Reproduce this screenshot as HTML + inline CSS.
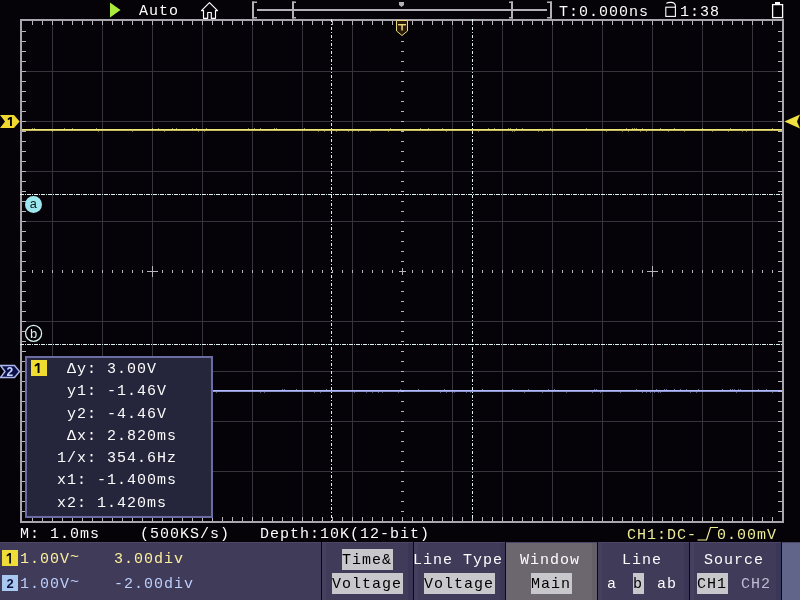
<!DOCTYPE html>
<html><head><meta charset="utf-8"><style>
html,body{margin:0;padding:0;}
body{width:800px;height:600px;background:#060308;position:relative;overflow:hidden;font-family:"Liberation Mono",monospace;}
.t{will-change:transform;position:absolute;white-space:pre;font-size:15px;letter-spacing:1px;line-height:15px;color:#fcfcfc;}
svg{position:absolute;left:0;top:0;will-change:transform;}
.hl{background:#c8c8cc;color:#000;padding-top:3px;padding-bottom:1px;padding-right:1px;}
</style></head><body>
<svg width="800" height="600" viewBox="0 0 800 600" shape-rendering="crispEdges">
<rect x="52" y="21" width="1" height="500" fill="#36343c" />
<rect x="102" y="21" width="1" height="500" fill="#36343c" />
<rect x="152" y="21" width="1" height="500" fill="#36343c" />
<rect x="202" y="21" width="1" height="500" fill="#36343c" />
<rect x="252" y="21" width="1" height="500" fill="#36343c" />
<rect x="302" y="21" width="1" height="500" fill="#36343c" />
<rect x="352" y="21" width="1" height="500" fill="#36343c" />
<rect x="452" y="21" width="1" height="500" fill="#36343c" />
<rect x="502" y="21" width="1" height="500" fill="#36343c" />
<rect x="552" y="21" width="1" height="500" fill="#36343c" />
<rect x="602" y="21" width="1" height="500" fill="#36343c" />
<rect x="652" y="21" width="1" height="500" fill="#36343c" />
<rect x="702" y="21" width="1" height="500" fill="#36343c" />
<rect x="752" y="21" width="1" height="500" fill="#36343c" />
<rect x="22" y="71" width="760" height="1" fill="#36343c" />
<rect x="22" y="121" width="760" height="1" fill="#36343c" />
<rect x="22" y="171" width="760" height="1" fill="#36343c" />
<rect x="22" y="221" width="760" height="1" fill="#36343c" />
<rect x="22" y="321" width="760" height="1" fill="#36343c" />
<rect x="22" y="371" width="760" height="1" fill="#36343c" />
<rect x="22" y="421" width="760" height="1" fill="#36343c" />
<rect x="22" y="471" width="760" height="1" fill="#36343c" />
<rect x="32" y="270" width="1" height="3" fill="#b8b4bc" />
<rect x="42" y="270" width="1" height="3" fill="#b8b4bc" />
<rect x="52" y="270" width="1" height="3" fill="#b8b4bc" />
<rect x="62" y="270" width="1" height="3" fill="#b8b4bc" />
<rect x="72" y="270" width="1" height="3" fill="#b8b4bc" />
<rect x="82" y="270" width="1" height="3" fill="#b8b4bc" />
<rect x="92" y="270" width="1" height="3" fill="#b8b4bc" />
<rect x="102" y="270" width="1" height="3" fill="#b8b4bc" />
<rect x="112" y="270" width="1" height="3" fill="#b8b4bc" />
<rect x="122" y="270" width="1" height="3" fill="#b8b4bc" />
<rect x="132" y="270" width="1" height="3" fill="#b8b4bc" />
<rect x="142" y="270" width="1" height="3" fill="#b8b4bc" />
<rect x="152" y="270" width="1" height="3" fill="#b8b4bc" />
<rect x="162" y="270" width="1" height="3" fill="#b8b4bc" />
<rect x="172" y="270" width="1" height="3" fill="#b8b4bc" />
<rect x="182" y="270" width="1" height="3" fill="#b8b4bc" />
<rect x="192" y="270" width="1" height="3" fill="#b8b4bc" />
<rect x="202" y="270" width="1" height="3" fill="#b8b4bc" />
<rect x="212" y="270" width="1" height="3" fill="#b8b4bc" />
<rect x="222" y="270" width="1" height="3" fill="#b8b4bc" />
<rect x="232" y="270" width="1" height="3" fill="#b8b4bc" />
<rect x="242" y="270" width="1" height="3" fill="#b8b4bc" />
<rect x="252" y="270" width="1" height="3" fill="#b8b4bc" />
<rect x="262" y="270" width="1" height="3" fill="#b8b4bc" />
<rect x="272" y="270" width="1" height="3" fill="#b8b4bc" />
<rect x="282" y="270" width="1" height="3" fill="#b8b4bc" />
<rect x="292" y="270" width="1" height="3" fill="#b8b4bc" />
<rect x="302" y="270" width="1" height="3" fill="#b8b4bc" />
<rect x="312" y="270" width="1" height="3" fill="#b8b4bc" />
<rect x="322" y="270" width="1" height="3" fill="#b8b4bc" />
<rect x="332" y="270" width="1" height="3" fill="#b8b4bc" />
<rect x="342" y="270" width="1" height="3" fill="#b8b4bc" />
<rect x="352" y="270" width="1" height="3" fill="#b8b4bc" />
<rect x="362" y="270" width="1" height="3" fill="#b8b4bc" />
<rect x="372" y="270" width="1" height="3" fill="#b8b4bc" />
<rect x="382" y="270" width="1" height="3" fill="#b8b4bc" />
<rect x="392" y="270" width="1" height="3" fill="#b8b4bc" />
<rect x="402" y="270" width="1" height="3" fill="#b8b4bc" />
<rect x="412" y="270" width="1" height="3" fill="#b8b4bc" />
<rect x="422" y="270" width="1" height="3" fill="#b8b4bc" />
<rect x="432" y="270" width="1" height="3" fill="#b8b4bc" />
<rect x="442" y="270" width="1" height="3" fill="#b8b4bc" />
<rect x="452" y="270" width="1" height="3" fill="#b8b4bc" />
<rect x="462" y="270" width="1" height="3" fill="#b8b4bc" />
<rect x="472" y="270" width="1" height="3" fill="#b8b4bc" />
<rect x="482" y="270" width="1" height="3" fill="#b8b4bc" />
<rect x="492" y="270" width="1" height="3" fill="#b8b4bc" />
<rect x="502" y="270" width="1" height="3" fill="#b8b4bc" />
<rect x="512" y="270" width="1" height="3" fill="#b8b4bc" />
<rect x="522" y="270" width="1" height="3" fill="#b8b4bc" />
<rect x="532" y="270" width="1" height="3" fill="#b8b4bc" />
<rect x="542" y="270" width="1" height="3" fill="#b8b4bc" />
<rect x="552" y="270" width="1" height="3" fill="#b8b4bc" />
<rect x="562" y="270" width="1" height="3" fill="#b8b4bc" />
<rect x="572" y="270" width="1" height="3" fill="#b8b4bc" />
<rect x="582" y="270" width="1" height="3" fill="#b8b4bc" />
<rect x="592" y="270" width="1" height="3" fill="#b8b4bc" />
<rect x="602" y="270" width="1" height="3" fill="#b8b4bc" />
<rect x="612" y="270" width="1" height="3" fill="#b8b4bc" />
<rect x="622" y="270" width="1" height="3" fill="#b8b4bc" />
<rect x="632" y="270" width="1" height="3" fill="#b8b4bc" />
<rect x="642" y="270" width="1" height="3" fill="#b8b4bc" />
<rect x="652" y="270" width="1" height="3" fill="#b8b4bc" />
<rect x="662" y="270" width="1" height="3" fill="#b8b4bc" />
<rect x="672" y="270" width="1" height="3" fill="#b8b4bc" />
<rect x="682" y="270" width="1" height="3" fill="#b8b4bc" />
<rect x="692" y="270" width="1" height="3" fill="#b8b4bc" />
<rect x="702" y="270" width="1" height="3" fill="#b8b4bc" />
<rect x="712" y="270" width="1" height="3" fill="#b8b4bc" />
<rect x="722" y="270" width="1" height="3" fill="#b8b4bc" />
<rect x="732" y="270" width="1" height="3" fill="#b8b4bc" />
<rect x="742" y="270" width="1" height="3" fill="#b8b4bc" />
<rect x="752" y="270" width="1" height="3" fill="#b8b4bc" />
<rect x="762" y="270" width="1" height="3" fill="#b8b4bc" />
<rect x="772" y="270" width="1" height="3" fill="#b8b4bc" />
<rect x="401" y="31" width="3" height="1" fill="#b8b4bc" />
<rect x="401" y="41" width="3" height="1" fill="#b8b4bc" />
<rect x="401" y="51" width="3" height="1" fill="#b8b4bc" />
<rect x="401" y="61" width="3" height="1" fill="#b8b4bc" />
<rect x="401" y="71" width="3" height="1" fill="#b8b4bc" />
<rect x="401" y="81" width="3" height="1" fill="#b8b4bc" />
<rect x="401" y="91" width="3" height="1" fill="#b8b4bc" />
<rect x="401" y="101" width="3" height="1" fill="#b8b4bc" />
<rect x="401" y="111" width="3" height="1" fill="#b8b4bc" />
<rect x="401" y="121" width="3" height="1" fill="#b8b4bc" />
<rect x="401" y="131" width="3" height="1" fill="#b8b4bc" />
<rect x="401" y="141" width="3" height="1" fill="#b8b4bc" />
<rect x="401" y="151" width="3" height="1" fill="#b8b4bc" />
<rect x="401" y="161" width="3" height="1" fill="#b8b4bc" />
<rect x="401" y="171" width="3" height="1" fill="#b8b4bc" />
<rect x="401" y="181" width="3" height="1" fill="#b8b4bc" />
<rect x="401" y="191" width="3" height="1" fill="#b8b4bc" />
<rect x="401" y="201" width="3" height="1" fill="#b8b4bc" />
<rect x="401" y="211" width="3" height="1" fill="#b8b4bc" />
<rect x="401" y="221" width="3" height="1" fill="#b8b4bc" />
<rect x="401" y="231" width="3" height="1" fill="#b8b4bc" />
<rect x="401" y="241" width="3" height="1" fill="#b8b4bc" />
<rect x="401" y="251" width="3" height="1" fill="#b8b4bc" />
<rect x="401" y="261" width="3" height="1" fill="#b8b4bc" />
<rect x="401" y="271" width="3" height="1" fill="#b8b4bc" />
<rect x="401" y="281" width="3" height="1" fill="#b8b4bc" />
<rect x="401" y="291" width="3" height="1" fill="#b8b4bc" />
<rect x="401" y="301" width="3" height="1" fill="#b8b4bc" />
<rect x="401" y="311" width="3" height="1" fill="#b8b4bc" />
<rect x="401" y="321" width="3" height="1" fill="#b8b4bc" />
<rect x="401" y="331" width="3" height="1" fill="#b8b4bc" />
<rect x="401" y="341" width="3" height="1" fill="#b8b4bc" />
<rect x="401" y="351" width="3" height="1" fill="#b8b4bc" />
<rect x="401" y="361" width="3" height="1" fill="#b8b4bc" />
<rect x="401" y="371" width="3" height="1" fill="#b8b4bc" />
<rect x="401" y="381" width="3" height="1" fill="#b8b4bc" />
<rect x="401" y="391" width="3" height="1" fill="#b8b4bc" />
<rect x="401" y="401" width="3" height="1" fill="#b8b4bc" />
<rect x="401" y="411" width="3" height="1" fill="#b8b4bc" />
<rect x="401" y="421" width="3" height="1" fill="#b8b4bc" />
<rect x="401" y="431" width="3" height="1" fill="#b8b4bc" />
<rect x="401" y="441" width="3" height="1" fill="#b8b4bc" />
<rect x="401" y="451" width="3" height="1" fill="#b8b4bc" />
<rect x="401" y="461" width="3" height="1" fill="#b8b4bc" />
<rect x="401" y="471" width="3" height="1" fill="#b8b4bc" />
<rect x="401" y="481" width="3" height="1" fill="#b8b4bc" />
<rect x="401" y="491" width="3" height="1" fill="#b8b4bc" />
<rect x="401" y="501" width="3" height="1" fill="#b8b4bc" />
<rect x="401" y="511" width="3" height="1" fill="#b8b4bc" />
<rect x="147" y="271" width="11" height="1" fill="#b8b4bc" />
<rect x="152" y="266" width="1" height="11" fill="#b8b4bc" />
<rect x="647" y="271" width="11" height="1" fill="#b8b4bc" />
<rect x="652" y="266" width="1" height="11" fill="#b8b4bc" />
<rect x="399" y="271" width="7" height="1" fill="#b8b4bc" />
<rect x="402" y="268" width="1" height="7" fill="#b8b4bc" />
<rect x="32" y="21" width="1" height="4" fill="#b8b4bc" />
<rect x="32" y="517" width="1" height="4" fill="#b8b4bc" />
<rect x="42" y="21" width="1" height="4" fill="#b8b4bc" />
<rect x="42" y="517" width="1" height="4" fill="#b8b4bc" />
<rect x="52" y="21" width="1" height="4" fill="#b8b4bc" />
<rect x="52" y="517" width="1" height="4" fill="#b8b4bc" />
<rect x="62" y="21" width="1" height="4" fill="#b8b4bc" />
<rect x="62" y="517" width="1" height="4" fill="#b8b4bc" />
<rect x="72" y="21" width="1" height="4" fill="#b8b4bc" />
<rect x="72" y="517" width="1" height="4" fill="#b8b4bc" />
<rect x="82" y="21" width="1" height="4" fill="#b8b4bc" />
<rect x="82" y="517" width="1" height="4" fill="#b8b4bc" />
<rect x="92" y="21" width="1" height="4" fill="#b8b4bc" />
<rect x="92" y="517" width="1" height="4" fill="#b8b4bc" />
<rect x="102" y="21" width="1" height="4" fill="#b8b4bc" />
<rect x="102" y="517" width="1" height="4" fill="#b8b4bc" />
<rect x="112" y="21" width="1" height="4" fill="#b8b4bc" />
<rect x="112" y="517" width="1" height="4" fill="#b8b4bc" />
<rect x="122" y="21" width="1" height="4" fill="#b8b4bc" />
<rect x="122" y="517" width="1" height="4" fill="#b8b4bc" />
<rect x="132" y="21" width="1" height="4" fill="#b8b4bc" />
<rect x="132" y="517" width="1" height="4" fill="#b8b4bc" />
<rect x="142" y="21" width="1" height="4" fill="#b8b4bc" />
<rect x="142" y="517" width="1" height="4" fill="#b8b4bc" />
<rect x="152" y="21" width="1" height="4" fill="#b8b4bc" />
<rect x="152" y="517" width="1" height="4" fill="#b8b4bc" />
<rect x="162" y="21" width="1" height="4" fill="#b8b4bc" />
<rect x="162" y="517" width="1" height="4" fill="#b8b4bc" />
<rect x="172" y="21" width="1" height="4" fill="#b8b4bc" />
<rect x="172" y="517" width="1" height="4" fill="#b8b4bc" />
<rect x="182" y="21" width="1" height="4" fill="#b8b4bc" />
<rect x="182" y="517" width="1" height="4" fill="#b8b4bc" />
<rect x="192" y="21" width="1" height="4" fill="#b8b4bc" />
<rect x="192" y="517" width="1" height="4" fill="#b8b4bc" />
<rect x="202" y="21" width="1" height="4" fill="#b8b4bc" />
<rect x="202" y="517" width="1" height="4" fill="#b8b4bc" />
<rect x="212" y="21" width="1" height="4" fill="#b8b4bc" />
<rect x="212" y="517" width="1" height="4" fill="#b8b4bc" />
<rect x="222" y="21" width="1" height="4" fill="#b8b4bc" />
<rect x="222" y="517" width="1" height="4" fill="#b8b4bc" />
<rect x="232" y="21" width="1" height="4" fill="#b8b4bc" />
<rect x="232" y="517" width="1" height="4" fill="#b8b4bc" />
<rect x="242" y="21" width="1" height="4" fill="#b8b4bc" />
<rect x="242" y="517" width="1" height="4" fill="#b8b4bc" />
<rect x="252" y="21" width="1" height="4" fill="#b8b4bc" />
<rect x="252" y="517" width="1" height="4" fill="#b8b4bc" />
<rect x="262" y="21" width="1" height="4" fill="#b8b4bc" />
<rect x="262" y="517" width="1" height="4" fill="#b8b4bc" />
<rect x="272" y="21" width="1" height="4" fill="#b8b4bc" />
<rect x="272" y="517" width="1" height="4" fill="#b8b4bc" />
<rect x="282" y="21" width="1" height="4" fill="#b8b4bc" />
<rect x="282" y="517" width="1" height="4" fill="#b8b4bc" />
<rect x="292" y="21" width="1" height="4" fill="#b8b4bc" />
<rect x="292" y="517" width="1" height="4" fill="#b8b4bc" />
<rect x="302" y="21" width="1" height="4" fill="#b8b4bc" />
<rect x="302" y="517" width="1" height="4" fill="#b8b4bc" />
<rect x="312" y="21" width="1" height="4" fill="#b8b4bc" />
<rect x="312" y="517" width="1" height="4" fill="#b8b4bc" />
<rect x="322" y="21" width="1" height="4" fill="#b8b4bc" />
<rect x="322" y="517" width="1" height="4" fill="#b8b4bc" />
<rect x="332" y="21" width="1" height="4" fill="#b8b4bc" />
<rect x="332" y="517" width="1" height="4" fill="#b8b4bc" />
<rect x="342" y="21" width="1" height="4" fill="#b8b4bc" />
<rect x="342" y="517" width="1" height="4" fill="#b8b4bc" />
<rect x="352" y="21" width="1" height="4" fill="#b8b4bc" />
<rect x="352" y="517" width="1" height="4" fill="#b8b4bc" />
<rect x="362" y="21" width="1" height="4" fill="#b8b4bc" />
<rect x="362" y="517" width="1" height="4" fill="#b8b4bc" />
<rect x="372" y="21" width="1" height="4" fill="#b8b4bc" />
<rect x="372" y="517" width="1" height="4" fill="#b8b4bc" />
<rect x="382" y="21" width="1" height="4" fill="#b8b4bc" />
<rect x="382" y="517" width="1" height="4" fill="#b8b4bc" />
<rect x="392" y="21" width="1" height="4" fill="#b8b4bc" />
<rect x="392" y="517" width="1" height="4" fill="#b8b4bc" />
<rect x="402" y="21" width="1" height="4" fill="#b8b4bc" />
<rect x="402" y="517" width="1" height="4" fill="#b8b4bc" />
<rect x="412" y="21" width="1" height="4" fill="#b8b4bc" />
<rect x="412" y="517" width="1" height="4" fill="#b8b4bc" />
<rect x="422" y="21" width="1" height="4" fill="#b8b4bc" />
<rect x="422" y="517" width="1" height="4" fill="#b8b4bc" />
<rect x="432" y="21" width="1" height="4" fill="#b8b4bc" />
<rect x="432" y="517" width="1" height="4" fill="#b8b4bc" />
<rect x="442" y="21" width="1" height="4" fill="#b8b4bc" />
<rect x="442" y="517" width="1" height="4" fill="#b8b4bc" />
<rect x="452" y="21" width="1" height="4" fill="#b8b4bc" />
<rect x="452" y="517" width="1" height="4" fill="#b8b4bc" />
<rect x="462" y="21" width="1" height="4" fill="#b8b4bc" />
<rect x="462" y="517" width="1" height="4" fill="#b8b4bc" />
<rect x="472" y="21" width="1" height="4" fill="#b8b4bc" />
<rect x="472" y="517" width="1" height="4" fill="#b8b4bc" />
<rect x="482" y="21" width="1" height="4" fill="#b8b4bc" />
<rect x="482" y="517" width="1" height="4" fill="#b8b4bc" />
<rect x="492" y="21" width="1" height="4" fill="#b8b4bc" />
<rect x="492" y="517" width="1" height="4" fill="#b8b4bc" />
<rect x="502" y="21" width="1" height="4" fill="#b8b4bc" />
<rect x="502" y="517" width="1" height="4" fill="#b8b4bc" />
<rect x="512" y="21" width="1" height="4" fill="#b8b4bc" />
<rect x="512" y="517" width="1" height="4" fill="#b8b4bc" />
<rect x="522" y="21" width="1" height="4" fill="#b8b4bc" />
<rect x="522" y="517" width="1" height="4" fill="#b8b4bc" />
<rect x="532" y="21" width="1" height="4" fill="#b8b4bc" />
<rect x="532" y="517" width="1" height="4" fill="#b8b4bc" />
<rect x="542" y="21" width="1" height="4" fill="#b8b4bc" />
<rect x="542" y="517" width="1" height="4" fill="#b8b4bc" />
<rect x="552" y="21" width="1" height="4" fill="#b8b4bc" />
<rect x="552" y="517" width="1" height="4" fill="#b8b4bc" />
<rect x="562" y="21" width="1" height="4" fill="#b8b4bc" />
<rect x="562" y="517" width="1" height="4" fill="#b8b4bc" />
<rect x="572" y="21" width="1" height="4" fill="#b8b4bc" />
<rect x="572" y="517" width="1" height="4" fill="#b8b4bc" />
<rect x="582" y="21" width="1" height="4" fill="#b8b4bc" />
<rect x="582" y="517" width="1" height="4" fill="#b8b4bc" />
<rect x="592" y="21" width="1" height="4" fill="#b8b4bc" />
<rect x="592" y="517" width="1" height="4" fill="#b8b4bc" />
<rect x="602" y="21" width="1" height="4" fill="#b8b4bc" />
<rect x="602" y="517" width="1" height="4" fill="#b8b4bc" />
<rect x="612" y="21" width="1" height="4" fill="#b8b4bc" />
<rect x="612" y="517" width="1" height="4" fill="#b8b4bc" />
<rect x="622" y="21" width="1" height="4" fill="#b8b4bc" />
<rect x="622" y="517" width="1" height="4" fill="#b8b4bc" />
<rect x="632" y="21" width="1" height="4" fill="#b8b4bc" />
<rect x="632" y="517" width="1" height="4" fill="#b8b4bc" />
<rect x="642" y="21" width="1" height="4" fill="#b8b4bc" />
<rect x="642" y="517" width="1" height="4" fill="#b8b4bc" />
<rect x="652" y="21" width="1" height="4" fill="#b8b4bc" />
<rect x="652" y="517" width="1" height="4" fill="#b8b4bc" />
<rect x="662" y="21" width="1" height="4" fill="#b8b4bc" />
<rect x="662" y="517" width="1" height="4" fill="#b8b4bc" />
<rect x="672" y="21" width="1" height="4" fill="#b8b4bc" />
<rect x="672" y="517" width="1" height="4" fill="#b8b4bc" />
<rect x="682" y="21" width="1" height="4" fill="#b8b4bc" />
<rect x="682" y="517" width="1" height="4" fill="#b8b4bc" />
<rect x="692" y="21" width="1" height="4" fill="#b8b4bc" />
<rect x="692" y="517" width="1" height="4" fill="#b8b4bc" />
<rect x="702" y="21" width="1" height="4" fill="#b8b4bc" />
<rect x="702" y="517" width="1" height="4" fill="#b8b4bc" />
<rect x="712" y="21" width="1" height="4" fill="#b8b4bc" />
<rect x="712" y="517" width="1" height="4" fill="#b8b4bc" />
<rect x="722" y="21" width="1" height="4" fill="#b8b4bc" />
<rect x="722" y="517" width="1" height="4" fill="#b8b4bc" />
<rect x="732" y="21" width="1" height="4" fill="#b8b4bc" />
<rect x="732" y="517" width="1" height="4" fill="#b8b4bc" />
<rect x="742" y="21" width="1" height="4" fill="#b8b4bc" />
<rect x="742" y="517" width="1" height="4" fill="#b8b4bc" />
<rect x="752" y="21" width="1" height="4" fill="#b8b4bc" />
<rect x="752" y="517" width="1" height="4" fill="#b8b4bc" />
<rect x="762" y="21" width="1" height="4" fill="#b8b4bc" />
<rect x="762" y="517" width="1" height="4" fill="#b8b4bc" />
<rect x="772" y="21" width="1" height="4" fill="#b8b4bc" />
<rect x="772" y="517" width="1" height="4" fill="#b8b4bc" />
<rect x="22" y="31" width="4" height="1" fill="#b8b4bc" />
<rect x="778" y="31" width="4" height="1" fill="#b8b4bc" />
<rect x="22" y="41" width="4" height="1" fill="#b8b4bc" />
<rect x="778" y="41" width="4" height="1" fill="#b8b4bc" />
<rect x="22" y="51" width="4" height="1" fill="#b8b4bc" />
<rect x="778" y="51" width="4" height="1" fill="#b8b4bc" />
<rect x="22" y="61" width="4" height="1" fill="#b8b4bc" />
<rect x="778" y="61" width="4" height="1" fill="#b8b4bc" />
<rect x="22" y="71" width="4" height="1" fill="#b8b4bc" />
<rect x="778" y="71" width="4" height="1" fill="#b8b4bc" />
<rect x="22" y="81" width="4" height="1" fill="#b8b4bc" />
<rect x="778" y="81" width="4" height="1" fill="#b8b4bc" />
<rect x="22" y="91" width="4" height="1" fill="#b8b4bc" />
<rect x="778" y="91" width="4" height="1" fill="#b8b4bc" />
<rect x="22" y="101" width="4" height="1" fill="#b8b4bc" />
<rect x="778" y="101" width="4" height="1" fill="#b8b4bc" />
<rect x="22" y="111" width="4" height="1" fill="#b8b4bc" />
<rect x="778" y="111" width="4" height="1" fill="#b8b4bc" />
<rect x="22" y="121" width="4" height="1" fill="#b8b4bc" />
<rect x="778" y="121" width="4" height="1" fill="#b8b4bc" />
<rect x="22" y="131" width="4" height="1" fill="#b8b4bc" />
<rect x="778" y="131" width="4" height="1" fill="#b8b4bc" />
<rect x="22" y="141" width="4" height="1" fill="#b8b4bc" />
<rect x="778" y="141" width="4" height="1" fill="#b8b4bc" />
<rect x="22" y="151" width="4" height="1" fill="#b8b4bc" />
<rect x="778" y="151" width="4" height="1" fill="#b8b4bc" />
<rect x="22" y="161" width="4" height="1" fill="#b8b4bc" />
<rect x="778" y="161" width="4" height="1" fill="#b8b4bc" />
<rect x="22" y="171" width="4" height="1" fill="#b8b4bc" />
<rect x="778" y="171" width="4" height="1" fill="#b8b4bc" />
<rect x="22" y="181" width="4" height="1" fill="#b8b4bc" />
<rect x="778" y="181" width="4" height="1" fill="#b8b4bc" />
<rect x="22" y="191" width="4" height="1" fill="#b8b4bc" />
<rect x="778" y="191" width="4" height="1" fill="#b8b4bc" />
<rect x="22" y="201" width="4" height="1" fill="#b8b4bc" />
<rect x="778" y="201" width="4" height="1" fill="#b8b4bc" />
<rect x="22" y="211" width="4" height="1" fill="#b8b4bc" />
<rect x="778" y="211" width="4" height="1" fill="#b8b4bc" />
<rect x="22" y="221" width="4" height="1" fill="#b8b4bc" />
<rect x="778" y="221" width="4" height="1" fill="#b8b4bc" />
<rect x="22" y="231" width="4" height="1" fill="#b8b4bc" />
<rect x="778" y="231" width="4" height="1" fill="#b8b4bc" />
<rect x="22" y="241" width="4" height="1" fill="#b8b4bc" />
<rect x="778" y="241" width="4" height="1" fill="#b8b4bc" />
<rect x="22" y="251" width="4" height="1" fill="#b8b4bc" />
<rect x="778" y="251" width="4" height="1" fill="#b8b4bc" />
<rect x="22" y="261" width="4" height="1" fill="#b8b4bc" />
<rect x="778" y="261" width="4" height="1" fill="#b8b4bc" />
<rect x="22" y="271" width="4" height="1" fill="#b8b4bc" />
<rect x="778" y="271" width="4" height="1" fill="#b8b4bc" />
<rect x="22" y="281" width="4" height="1" fill="#b8b4bc" />
<rect x="778" y="281" width="4" height="1" fill="#b8b4bc" />
<rect x="22" y="291" width="4" height="1" fill="#b8b4bc" />
<rect x="778" y="291" width="4" height="1" fill="#b8b4bc" />
<rect x="22" y="301" width="4" height="1" fill="#b8b4bc" />
<rect x="778" y="301" width="4" height="1" fill="#b8b4bc" />
<rect x="22" y="311" width="4" height="1" fill="#b8b4bc" />
<rect x="778" y="311" width="4" height="1" fill="#b8b4bc" />
<rect x="22" y="321" width="4" height="1" fill="#b8b4bc" />
<rect x="778" y="321" width="4" height="1" fill="#b8b4bc" />
<rect x="22" y="331" width="4" height="1" fill="#b8b4bc" />
<rect x="778" y="331" width="4" height="1" fill="#b8b4bc" />
<rect x="22" y="341" width="4" height="1" fill="#b8b4bc" />
<rect x="778" y="341" width="4" height="1" fill="#b8b4bc" />
<rect x="22" y="351" width="4" height="1" fill="#b8b4bc" />
<rect x="778" y="351" width="4" height="1" fill="#b8b4bc" />
<rect x="22" y="361" width="4" height="1" fill="#b8b4bc" />
<rect x="778" y="361" width="4" height="1" fill="#b8b4bc" />
<rect x="22" y="371" width="4" height="1" fill="#b8b4bc" />
<rect x="778" y="371" width="4" height="1" fill="#b8b4bc" />
<rect x="22" y="381" width="4" height="1" fill="#b8b4bc" />
<rect x="778" y="381" width="4" height="1" fill="#b8b4bc" />
<rect x="22" y="391" width="4" height="1" fill="#b8b4bc" />
<rect x="778" y="391" width="4" height="1" fill="#b8b4bc" />
<rect x="22" y="401" width="4" height="1" fill="#b8b4bc" />
<rect x="778" y="401" width="4" height="1" fill="#b8b4bc" />
<rect x="22" y="411" width="4" height="1" fill="#b8b4bc" />
<rect x="778" y="411" width="4" height="1" fill="#b8b4bc" />
<rect x="22" y="421" width="4" height="1" fill="#b8b4bc" />
<rect x="778" y="421" width="4" height="1" fill="#b8b4bc" />
<rect x="22" y="431" width="4" height="1" fill="#b8b4bc" />
<rect x="778" y="431" width="4" height="1" fill="#b8b4bc" />
<rect x="22" y="441" width="4" height="1" fill="#b8b4bc" />
<rect x="778" y="441" width="4" height="1" fill="#b8b4bc" />
<rect x="22" y="451" width="4" height="1" fill="#b8b4bc" />
<rect x="778" y="451" width="4" height="1" fill="#b8b4bc" />
<rect x="22" y="461" width="4" height="1" fill="#b8b4bc" />
<rect x="778" y="461" width="4" height="1" fill="#b8b4bc" />
<rect x="22" y="471" width="4" height="1" fill="#b8b4bc" />
<rect x="778" y="471" width="4" height="1" fill="#b8b4bc" />
<rect x="22" y="481" width="4" height="1" fill="#b8b4bc" />
<rect x="778" y="481" width="4" height="1" fill="#b8b4bc" />
<rect x="22" y="491" width="4" height="1" fill="#b8b4bc" />
<rect x="778" y="491" width="4" height="1" fill="#b8b4bc" />
<rect x="22" y="501" width="4" height="1" fill="#b8b4bc" />
<rect x="778" y="501" width="4" height="1" fill="#b8b4bc" />
<rect x="22" y="511" width="4" height="1" fill="#b8b4bc" />
<rect x="778" y="511" width="4" height="1" fill="#b8b4bc" />
<rect x="20" y="19" width="764" height="2" fill="#aaa6ae" />
<rect x="20" y="521" width="764" height="2" fill="#aaa6ae" />
<rect x="20" y="19" width="2" height="504" fill="#aaa6ae" />
<rect x="782" y="19" width="2" height="504" fill="#aaa6ae" />
<rect x="20" y="194" width="4" height="1" fill="#dcf2ee" />
<rect x="25" y="194" width="1" height="1" fill="#dcf2ee" />
<rect x="27" y="194" width="4" height="1" fill="#dcf2ee" />
<rect x="32" y="194" width="1" height="1" fill="#dcf2ee" />
<rect x="34" y="194" width="4" height="1" fill="#dcf2ee" />
<rect x="39" y="194" width="1" height="1" fill="#dcf2ee" />
<rect x="41" y="194" width="4" height="1" fill="#dcf2ee" />
<rect x="46" y="194" width="1" height="1" fill="#dcf2ee" />
<rect x="48" y="194" width="4" height="1" fill="#dcf2ee" />
<rect x="53" y="194" width="1" height="1" fill="#dcf2ee" />
<rect x="55" y="194" width="4" height="1" fill="#dcf2ee" />
<rect x="60" y="194" width="1" height="1" fill="#dcf2ee" />
<rect x="62" y="194" width="4" height="1" fill="#dcf2ee" />
<rect x="67" y="194" width="1" height="1" fill="#dcf2ee" />
<rect x="69" y="194" width="4" height="1" fill="#dcf2ee" />
<rect x="74" y="194" width="1" height="1" fill="#dcf2ee" />
<rect x="76" y="194" width="4" height="1" fill="#dcf2ee" />
<rect x="81" y="194" width="1" height="1" fill="#dcf2ee" />
<rect x="83" y="194" width="4" height="1" fill="#dcf2ee" />
<rect x="88" y="194" width="1" height="1" fill="#dcf2ee" />
<rect x="90" y="194" width="4" height="1" fill="#dcf2ee" />
<rect x="95" y="194" width="1" height="1" fill="#dcf2ee" />
<rect x="97" y="194" width="4" height="1" fill="#dcf2ee" />
<rect x="102" y="194" width="1" height="1" fill="#dcf2ee" />
<rect x="104" y="194" width="4" height="1" fill="#dcf2ee" />
<rect x="109" y="194" width="1" height="1" fill="#dcf2ee" />
<rect x="111" y="194" width="4" height="1" fill="#dcf2ee" />
<rect x="116" y="194" width="1" height="1" fill="#dcf2ee" />
<rect x="118" y="194" width="4" height="1" fill="#dcf2ee" />
<rect x="123" y="194" width="1" height="1" fill="#dcf2ee" />
<rect x="125" y="194" width="4" height="1" fill="#dcf2ee" />
<rect x="130" y="194" width="1" height="1" fill="#dcf2ee" />
<rect x="132" y="194" width="4" height="1" fill="#dcf2ee" />
<rect x="137" y="194" width="1" height="1" fill="#dcf2ee" />
<rect x="139" y="194" width="4" height="1" fill="#dcf2ee" />
<rect x="144" y="194" width="1" height="1" fill="#dcf2ee" />
<rect x="146" y="194" width="4" height="1" fill="#dcf2ee" />
<rect x="151" y="194" width="1" height="1" fill="#dcf2ee" />
<rect x="153" y="194" width="4" height="1" fill="#dcf2ee" />
<rect x="158" y="194" width="1" height="1" fill="#dcf2ee" />
<rect x="160" y="194" width="4" height="1" fill="#dcf2ee" />
<rect x="165" y="194" width="1" height="1" fill="#dcf2ee" />
<rect x="167" y="194" width="4" height="1" fill="#dcf2ee" />
<rect x="172" y="194" width="1" height="1" fill="#dcf2ee" />
<rect x="174" y="194" width="4" height="1" fill="#dcf2ee" />
<rect x="179" y="194" width="1" height="1" fill="#dcf2ee" />
<rect x="181" y="194" width="4" height="1" fill="#dcf2ee" />
<rect x="186" y="194" width="1" height="1" fill="#dcf2ee" />
<rect x="188" y="194" width="4" height="1" fill="#dcf2ee" />
<rect x="193" y="194" width="1" height="1" fill="#dcf2ee" />
<rect x="195" y="194" width="4" height="1" fill="#dcf2ee" />
<rect x="200" y="194" width="1" height="1" fill="#dcf2ee" />
<rect x="202" y="194" width="4" height="1" fill="#dcf2ee" />
<rect x="207" y="194" width="1" height="1" fill="#dcf2ee" />
<rect x="209" y="194" width="4" height="1" fill="#dcf2ee" />
<rect x="214" y="194" width="1" height="1" fill="#dcf2ee" />
<rect x="216" y="194" width="4" height="1" fill="#dcf2ee" />
<rect x="221" y="194" width="1" height="1" fill="#dcf2ee" />
<rect x="223" y="194" width="4" height="1" fill="#dcf2ee" />
<rect x="228" y="194" width="1" height="1" fill="#dcf2ee" />
<rect x="230" y="194" width="4" height="1" fill="#dcf2ee" />
<rect x="235" y="194" width="1" height="1" fill="#dcf2ee" />
<rect x="237" y="194" width="4" height="1" fill="#dcf2ee" />
<rect x="242" y="194" width="1" height="1" fill="#dcf2ee" />
<rect x="244" y="194" width="4" height="1" fill="#dcf2ee" />
<rect x="249" y="194" width="1" height="1" fill="#dcf2ee" />
<rect x="251" y="194" width="4" height="1" fill="#dcf2ee" />
<rect x="256" y="194" width="1" height="1" fill="#dcf2ee" />
<rect x="258" y="194" width="4" height="1" fill="#dcf2ee" />
<rect x="263" y="194" width="1" height="1" fill="#dcf2ee" />
<rect x="265" y="194" width="4" height="1" fill="#dcf2ee" />
<rect x="270" y="194" width="1" height="1" fill="#dcf2ee" />
<rect x="272" y="194" width="4" height="1" fill="#dcf2ee" />
<rect x="277" y="194" width="1" height="1" fill="#dcf2ee" />
<rect x="279" y="194" width="4" height="1" fill="#dcf2ee" />
<rect x="284" y="194" width="1" height="1" fill="#dcf2ee" />
<rect x="286" y="194" width="4" height="1" fill="#dcf2ee" />
<rect x="291" y="194" width="1" height="1" fill="#dcf2ee" />
<rect x="293" y="194" width="4" height="1" fill="#dcf2ee" />
<rect x="298" y="194" width="1" height="1" fill="#dcf2ee" />
<rect x="300" y="194" width="4" height="1" fill="#dcf2ee" />
<rect x="305" y="194" width="1" height="1" fill="#dcf2ee" />
<rect x="307" y="194" width="4" height="1" fill="#dcf2ee" />
<rect x="312" y="194" width="1" height="1" fill="#dcf2ee" />
<rect x="314" y="194" width="4" height="1" fill="#dcf2ee" />
<rect x="319" y="194" width="1" height="1" fill="#dcf2ee" />
<rect x="321" y="194" width="4" height="1" fill="#dcf2ee" />
<rect x="326" y="194" width="1" height="1" fill="#dcf2ee" />
<rect x="328" y="194" width="4" height="1" fill="#dcf2ee" />
<rect x="333" y="194" width="1" height="1" fill="#dcf2ee" />
<rect x="335" y="194" width="4" height="1" fill="#dcf2ee" />
<rect x="340" y="194" width="1" height="1" fill="#dcf2ee" />
<rect x="342" y="194" width="4" height="1" fill="#dcf2ee" />
<rect x="347" y="194" width="1" height="1" fill="#dcf2ee" />
<rect x="349" y="194" width="4" height="1" fill="#dcf2ee" />
<rect x="354" y="194" width="1" height="1" fill="#dcf2ee" />
<rect x="356" y="194" width="4" height="1" fill="#dcf2ee" />
<rect x="361" y="194" width="1" height="1" fill="#dcf2ee" />
<rect x="363" y="194" width="4" height="1" fill="#dcf2ee" />
<rect x="368" y="194" width="1" height="1" fill="#dcf2ee" />
<rect x="370" y="194" width="4" height="1" fill="#dcf2ee" />
<rect x="375" y="194" width="1" height="1" fill="#dcf2ee" />
<rect x="377" y="194" width="4" height="1" fill="#dcf2ee" />
<rect x="382" y="194" width="1" height="1" fill="#dcf2ee" />
<rect x="384" y="194" width="4" height="1" fill="#dcf2ee" />
<rect x="389" y="194" width="1" height="1" fill="#dcf2ee" />
<rect x="391" y="194" width="4" height="1" fill="#dcf2ee" />
<rect x="396" y="194" width="1" height="1" fill="#dcf2ee" />
<rect x="398" y="194" width="4" height="1" fill="#dcf2ee" />
<rect x="403" y="194" width="1" height="1" fill="#dcf2ee" />
<rect x="405" y="194" width="4" height="1" fill="#dcf2ee" />
<rect x="410" y="194" width="1" height="1" fill="#dcf2ee" />
<rect x="412" y="194" width="4" height="1" fill="#dcf2ee" />
<rect x="417" y="194" width="1" height="1" fill="#dcf2ee" />
<rect x="419" y="194" width="4" height="1" fill="#dcf2ee" />
<rect x="424" y="194" width="1" height="1" fill="#dcf2ee" />
<rect x="426" y="194" width="4" height="1" fill="#dcf2ee" />
<rect x="431" y="194" width="1" height="1" fill="#dcf2ee" />
<rect x="433" y="194" width="4" height="1" fill="#dcf2ee" />
<rect x="438" y="194" width="1" height="1" fill="#dcf2ee" />
<rect x="440" y="194" width="4" height="1" fill="#dcf2ee" />
<rect x="445" y="194" width="1" height="1" fill="#dcf2ee" />
<rect x="447" y="194" width="4" height="1" fill="#dcf2ee" />
<rect x="452" y="194" width="1" height="1" fill="#dcf2ee" />
<rect x="454" y="194" width="4" height="1" fill="#dcf2ee" />
<rect x="459" y="194" width="1" height="1" fill="#dcf2ee" />
<rect x="461" y="194" width="4" height="1" fill="#dcf2ee" />
<rect x="466" y="194" width="1" height="1" fill="#dcf2ee" />
<rect x="468" y="194" width="4" height="1" fill="#dcf2ee" />
<rect x="473" y="194" width="1" height="1" fill="#dcf2ee" />
<rect x="475" y="194" width="4" height="1" fill="#dcf2ee" />
<rect x="480" y="194" width="1" height="1" fill="#dcf2ee" />
<rect x="482" y="194" width="4" height="1" fill="#dcf2ee" />
<rect x="487" y="194" width="1" height="1" fill="#dcf2ee" />
<rect x="489" y="194" width="4" height="1" fill="#dcf2ee" />
<rect x="494" y="194" width="1" height="1" fill="#dcf2ee" />
<rect x="496" y="194" width="4" height="1" fill="#dcf2ee" />
<rect x="501" y="194" width="1" height="1" fill="#dcf2ee" />
<rect x="503" y="194" width="4" height="1" fill="#dcf2ee" />
<rect x="508" y="194" width="1" height="1" fill="#dcf2ee" />
<rect x="510" y="194" width="4" height="1" fill="#dcf2ee" />
<rect x="515" y="194" width="1" height="1" fill="#dcf2ee" />
<rect x="517" y="194" width="4" height="1" fill="#dcf2ee" />
<rect x="522" y="194" width="1" height="1" fill="#dcf2ee" />
<rect x="524" y="194" width="4" height="1" fill="#dcf2ee" />
<rect x="529" y="194" width="1" height="1" fill="#dcf2ee" />
<rect x="531" y="194" width="4" height="1" fill="#dcf2ee" />
<rect x="536" y="194" width="1" height="1" fill="#dcf2ee" />
<rect x="538" y="194" width="4" height="1" fill="#dcf2ee" />
<rect x="543" y="194" width="1" height="1" fill="#dcf2ee" />
<rect x="545" y="194" width="4" height="1" fill="#dcf2ee" />
<rect x="550" y="194" width="1" height="1" fill="#dcf2ee" />
<rect x="552" y="194" width="4" height="1" fill="#dcf2ee" />
<rect x="557" y="194" width="1" height="1" fill="#dcf2ee" />
<rect x="559" y="194" width="4" height="1" fill="#dcf2ee" />
<rect x="564" y="194" width="1" height="1" fill="#dcf2ee" />
<rect x="566" y="194" width="4" height="1" fill="#dcf2ee" />
<rect x="571" y="194" width="1" height="1" fill="#dcf2ee" />
<rect x="573" y="194" width="4" height="1" fill="#dcf2ee" />
<rect x="578" y="194" width="1" height="1" fill="#dcf2ee" />
<rect x="580" y="194" width="4" height="1" fill="#dcf2ee" />
<rect x="585" y="194" width="1" height="1" fill="#dcf2ee" />
<rect x="587" y="194" width="4" height="1" fill="#dcf2ee" />
<rect x="592" y="194" width="1" height="1" fill="#dcf2ee" />
<rect x="594" y="194" width="4" height="1" fill="#dcf2ee" />
<rect x="599" y="194" width="1" height="1" fill="#dcf2ee" />
<rect x="601" y="194" width="4" height="1" fill="#dcf2ee" />
<rect x="606" y="194" width="1" height="1" fill="#dcf2ee" />
<rect x="608" y="194" width="4" height="1" fill="#dcf2ee" />
<rect x="613" y="194" width="1" height="1" fill="#dcf2ee" />
<rect x="615" y="194" width="4" height="1" fill="#dcf2ee" />
<rect x="620" y="194" width="1" height="1" fill="#dcf2ee" />
<rect x="622" y="194" width="4" height="1" fill="#dcf2ee" />
<rect x="627" y="194" width="1" height="1" fill="#dcf2ee" />
<rect x="629" y="194" width="4" height="1" fill="#dcf2ee" />
<rect x="634" y="194" width="1" height="1" fill="#dcf2ee" />
<rect x="636" y="194" width="4" height="1" fill="#dcf2ee" />
<rect x="641" y="194" width="1" height="1" fill="#dcf2ee" />
<rect x="643" y="194" width="4" height="1" fill="#dcf2ee" />
<rect x="648" y="194" width="1" height="1" fill="#dcf2ee" />
<rect x="650" y="194" width="4" height="1" fill="#dcf2ee" />
<rect x="655" y="194" width="1" height="1" fill="#dcf2ee" />
<rect x="657" y="194" width="4" height="1" fill="#dcf2ee" />
<rect x="662" y="194" width="1" height="1" fill="#dcf2ee" />
<rect x="664" y="194" width="4" height="1" fill="#dcf2ee" />
<rect x="669" y="194" width="1" height="1" fill="#dcf2ee" />
<rect x="671" y="194" width="4" height="1" fill="#dcf2ee" />
<rect x="676" y="194" width="1" height="1" fill="#dcf2ee" />
<rect x="678" y="194" width="4" height="1" fill="#dcf2ee" />
<rect x="683" y="194" width="1" height="1" fill="#dcf2ee" />
<rect x="685" y="194" width="4" height="1" fill="#dcf2ee" />
<rect x="690" y="194" width="1" height="1" fill="#dcf2ee" />
<rect x="692" y="194" width="4" height="1" fill="#dcf2ee" />
<rect x="697" y="194" width="1" height="1" fill="#dcf2ee" />
<rect x="699" y="194" width="4" height="1" fill="#dcf2ee" />
<rect x="704" y="194" width="1" height="1" fill="#dcf2ee" />
<rect x="706" y="194" width="4" height="1" fill="#dcf2ee" />
<rect x="711" y="194" width="1" height="1" fill="#dcf2ee" />
<rect x="713" y="194" width="4" height="1" fill="#dcf2ee" />
<rect x="718" y="194" width="1" height="1" fill="#dcf2ee" />
<rect x="720" y="194" width="4" height="1" fill="#dcf2ee" />
<rect x="725" y="194" width="1" height="1" fill="#dcf2ee" />
<rect x="727" y="194" width="4" height="1" fill="#dcf2ee" />
<rect x="732" y="194" width="1" height="1" fill="#dcf2ee" />
<rect x="734" y="194" width="4" height="1" fill="#dcf2ee" />
<rect x="739" y="194" width="1" height="1" fill="#dcf2ee" />
<rect x="741" y="194" width="4" height="1" fill="#dcf2ee" />
<rect x="746" y="194" width="1" height="1" fill="#dcf2ee" />
<rect x="748" y="194" width="4" height="1" fill="#dcf2ee" />
<rect x="753" y="194" width="1" height="1" fill="#dcf2ee" />
<rect x="755" y="194" width="4" height="1" fill="#dcf2ee" />
<rect x="760" y="194" width="1" height="1" fill="#dcf2ee" />
<rect x="762" y="194" width="4" height="1" fill="#dcf2ee" />
<rect x="767" y="194" width="1" height="1" fill="#dcf2ee" />
<rect x="769" y="194" width="4" height="1" fill="#dcf2ee" />
<rect x="774" y="194" width="1" height="1" fill="#dcf2ee" />
<rect x="776" y="194" width="4" height="1" fill="#dcf2ee" />
<rect x="781" y="194" width="1" height="1" fill="#dcf2ee" />
<rect x="20" y="344" width="4" height="1" fill="#dcf2ee" />
<rect x="25" y="344" width="1" height="1" fill="#dcf2ee" />
<rect x="27" y="344" width="4" height="1" fill="#dcf2ee" />
<rect x="32" y="344" width="1" height="1" fill="#dcf2ee" />
<rect x="34" y="344" width="4" height="1" fill="#dcf2ee" />
<rect x="39" y="344" width="1" height="1" fill="#dcf2ee" />
<rect x="41" y="344" width="4" height="1" fill="#dcf2ee" />
<rect x="46" y="344" width="1" height="1" fill="#dcf2ee" />
<rect x="48" y="344" width="4" height="1" fill="#dcf2ee" />
<rect x="53" y="344" width="1" height="1" fill="#dcf2ee" />
<rect x="55" y="344" width="4" height="1" fill="#dcf2ee" />
<rect x="60" y="344" width="1" height="1" fill="#dcf2ee" />
<rect x="62" y="344" width="4" height="1" fill="#dcf2ee" />
<rect x="67" y="344" width="1" height="1" fill="#dcf2ee" />
<rect x="69" y="344" width="4" height="1" fill="#dcf2ee" />
<rect x="74" y="344" width="1" height="1" fill="#dcf2ee" />
<rect x="76" y="344" width="4" height="1" fill="#dcf2ee" />
<rect x="81" y="344" width="1" height="1" fill="#dcf2ee" />
<rect x="83" y="344" width="4" height="1" fill="#dcf2ee" />
<rect x="88" y="344" width="1" height="1" fill="#dcf2ee" />
<rect x="90" y="344" width="4" height="1" fill="#dcf2ee" />
<rect x="95" y="344" width="1" height="1" fill="#dcf2ee" />
<rect x="97" y="344" width="4" height="1" fill="#dcf2ee" />
<rect x="102" y="344" width="1" height="1" fill="#dcf2ee" />
<rect x="104" y="344" width="4" height="1" fill="#dcf2ee" />
<rect x="109" y="344" width="1" height="1" fill="#dcf2ee" />
<rect x="111" y="344" width="4" height="1" fill="#dcf2ee" />
<rect x="116" y="344" width="1" height="1" fill="#dcf2ee" />
<rect x="118" y="344" width="4" height="1" fill="#dcf2ee" />
<rect x="123" y="344" width="1" height="1" fill="#dcf2ee" />
<rect x="125" y="344" width="4" height="1" fill="#dcf2ee" />
<rect x="130" y="344" width="1" height="1" fill="#dcf2ee" />
<rect x="132" y="344" width="4" height="1" fill="#dcf2ee" />
<rect x="137" y="344" width="1" height="1" fill="#dcf2ee" />
<rect x="139" y="344" width="4" height="1" fill="#dcf2ee" />
<rect x="144" y="344" width="1" height="1" fill="#dcf2ee" />
<rect x="146" y="344" width="4" height="1" fill="#dcf2ee" />
<rect x="151" y="344" width="1" height="1" fill="#dcf2ee" />
<rect x="153" y="344" width="4" height="1" fill="#dcf2ee" />
<rect x="158" y="344" width="1" height="1" fill="#dcf2ee" />
<rect x="160" y="344" width="4" height="1" fill="#dcf2ee" />
<rect x="165" y="344" width="1" height="1" fill="#dcf2ee" />
<rect x="167" y="344" width="4" height="1" fill="#dcf2ee" />
<rect x="172" y="344" width="1" height="1" fill="#dcf2ee" />
<rect x="174" y="344" width="4" height="1" fill="#dcf2ee" />
<rect x="179" y="344" width="1" height="1" fill="#dcf2ee" />
<rect x="181" y="344" width="4" height="1" fill="#dcf2ee" />
<rect x="186" y="344" width="1" height="1" fill="#dcf2ee" />
<rect x="188" y="344" width="4" height="1" fill="#dcf2ee" />
<rect x="193" y="344" width="1" height="1" fill="#dcf2ee" />
<rect x="195" y="344" width="4" height="1" fill="#dcf2ee" />
<rect x="200" y="344" width="1" height="1" fill="#dcf2ee" />
<rect x="202" y="344" width="4" height="1" fill="#dcf2ee" />
<rect x="207" y="344" width="1" height="1" fill="#dcf2ee" />
<rect x="209" y="344" width="4" height="1" fill="#dcf2ee" />
<rect x="214" y="344" width="1" height="1" fill="#dcf2ee" />
<rect x="216" y="344" width="4" height="1" fill="#dcf2ee" />
<rect x="221" y="344" width="1" height="1" fill="#dcf2ee" />
<rect x="223" y="344" width="4" height="1" fill="#dcf2ee" />
<rect x="228" y="344" width="1" height="1" fill="#dcf2ee" />
<rect x="230" y="344" width="4" height="1" fill="#dcf2ee" />
<rect x="235" y="344" width="1" height="1" fill="#dcf2ee" />
<rect x="237" y="344" width="4" height="1" fill="#dcf2ee" />
<rect x="242" y="344" width="1" height="1" fill="#dcf2ee" />
<rect x="244" y="344" width="4" height="1" fill="#dcf2ee" />
<rect x="249" y="344" width="1" height="1" fill="#dcf2ee" />
<rect x="251" y="344" width="4" height="1" fill="#dcf2ee" />
<rect x="256" y="344" width="1" height="1" fill="#dcf2ee" />
<rect x="258" y="344" width="4" height="1" fill="#dcf2ee" />
<rect x="263" y="344" width="1" height="1" fill="#dcf2ee" />
<rect x="265" y="344" width="4" height="1" fill="#dcf2ee" />
<rect x="270" y="344" width="1" height="1" fill="#dcf2ee" />
<rect x="272" y="344" width="4" height="1" fill="#dcf2ee" />
<rect x="277" y="344" width="1" height="1" fill="#dcf2ee" />
<rect x="279" y="344" width="4" height="1" fill="#dcf2ee" />
<rect x="284" y="344" width="1" height="1" fill="#dcf2ee" />
<rect x="286" y="344" width="4" height="1" fill="#dcf2ee" />
<rect x="291" y="344" width="1" height="1" fill="#dcf2ee" />
<rect x="293" y="344" width="4" height="1" fill="#dcf2ee" />
<rect x="298" y="344" width="1" height="1" fill="#dcf2ee" />
<rect x="300" y="344" width="4" height="1" fill="#dcf2ee" />
<rect x="305" y="344" width="1" height="1" fill="#dcf2ee" />
<rect x="307" y="344" width="4" height="1" fill="#dcf2ee" />
<rect x="312" y="344" width="1" height="1" fill="#dcf2ee" />
<rect x="314" y="344" width="4" height="1" fill="#dcf2ee" />
<rect x="319" y="344" width="1" height="1" fill="#dcf2ee" />
<rect x="321" y="344" width="4" height="1" fill="#dcf2ee" />
<rect x="326" y="344" width="1" height="1" fill="#dcf2ee" />
<rect x="328" y="344" width="4" height="1" fill="#dcf2ee" />
<rect x="333" y="344" width="1" height="1" fill="#dcf2ee" />
<rect x="335" y="344" width="4" height="1" fill="#dcf2ee" />
<rect x="340" y="344" width="1" height="1" fill="#dcf2ee" />
<rect x="342" y="344" width="4" height="1" fill="#dcf2ee" />
<rect x="347" y="344" width="1" height="1" fill="#dcf2ee" />
<rect x="349" y="344" width="4" height="1" fill="#dcf2ee" />
<rect x="354" y="344" width="1" height="1" fill="#dcf2ee" />
<rect x="356" y="344" width="4" height="1" fill="#dcf2ee" />
<rect x="361" y="344" width="1" height="1" fill="#dcf2ee" />
<rect x="363" y="344" width="4" height="1" fill="#dcf2ee" />
<rect x="368" y="344" width="1" height="1" fill="#dcf2ee" />
<rect x="370" y="344" width="4" height="1" fill="#dcf2ee" />
<rect x="375" y="344" width="1" height="1" fill="#dcf2ee" />
<rect x="377" y="344" width="4" height="1" fill="#dcf2ee" />
<rect x="382" y="344" width="1" height="1" fill="#dcf2ee" />
<rect x="384" y="344" width="4" height="1" fill="#dcf2ee" />
<rect x="389" y="344" width="1" height="1" fill="#dcf2ee" />
<rect x="391" y="344" width="4" height="1" fill="#dcf2ee" />
<rect x="396" y="344" width="1" height="1" fill="#dcf2ee" />
<rect x="398" y="344" width="4" height="1" fill="#dcf2ee" />
<rect x="403" y="344" width="1" height="1" fill="#dcf2ee" />
<rect x="405" y="344" width="4" height="1" fill="#dcf2ee" />
<rect x="410" y="344" width="1" height="1" fill="#dcf2ee" />
<rect x="412" y="344" width="4" height="1" fill="#dcf2ee" />
<rect x="417" y="344" width="1" height="1" fill="#dcf2ee" />
<rect x="419" y="344" width="4" height="1" fill="#dcf2ee" />
<rect x="424" y="344" width="1" height="1" fill="#dcf2ee" />
<rect x="426" y="344" width="4" height="1" fill="#dcf2ee" />
<rect x="431" y="344" width="1" height="1" fill="#dcf2ee" />
<rect x="433" y="344" width="4" height="1" fill="#dcf2ee" />
<rect x="438" y="344" width="1" height="1" fill="#dcf2ee" />
<rect x="440" y="344" width="4" height="1" fill="#dcf2ee" />
<rect x="445" y="344" width="1" height="1" fill="#dcf2ee" />
<rect x="447" y="344" width="4" height="1" fill="#dcf2ee" />
<rect x="452" y="344" width="1" height="1" fill="#dcf2ee" />
<rect x="454" y="344" width="4" height="1" fill="#dcf2ee" />
<rect x="459" y="344" width="1" height="1" fill="#dcf2ee" />
<rect x="461" y="344" width="4" height="1" fill="#dcf2ee" />
<rect x="466" y="344" width="1" height="1" fill="#dcf2ee" />
<rect x="468" y="344" width="4" height="1" fill="#dcf2ee" />
<rect x="473" y="344" width="1" height="1" fill="#dcf2ee" />
<rect x="475" y="344" width="4" height="1" fill="#dcf2ee" />
<rect x="480" y="344" width="1" height="1" fill="#dcf2ee" />
<rect x="482" y="344" width="4" height="1" fill="#dcf2ee" />
<rect x="487" y="344" width="1" height="1" fill="#dcf2ee" />
<rect x="489" y="344" width="4" height="1" fill="#dcf2ee" />
<rect x="494" y="344" width="1" height="1" fill="#dcf2ee" />
<rect x="496" y="344" width="4" height="1" fill="#dcf2ee" />
<rect x="501" y="344" width="1" height="1" fill="#dcf2ee" />
<rect x="503" y="344" width="4" height="1" fill="#dcf2ee" />
<rect x="508" y="344" width="1" height="1" fill="#dcf2ee" />
<rect x="510" y="344" width="4" height="1" fill="#dcf2ee" />
<rect x="515" y="344" width="1" height="1" fill="#dcf2ee" />
<rect x="517" y="344" width="4" height="1" fill="#dcf2ee" />
<rect x="522" y="344" width="1" height="1" fill="#dcf2ee" />
<rect x="524" y="344" width="4" height="1" fill="#dcf2ee" />
<rect x="529" y="344" width="1" height="1" fill="#dcf2ee" />
<rect x="531" y="344" width="4" height="1" fill="#dcf2ee" />
<rect x="536" y="344" width="1" height="1" fill="#dcf2ee" />
<rect x="538" y="344" width="4" height="1" fill="#dcf2ee" />
<rect x="543" y="344" width="1" height="1" fill="#dcf2ee" />
<rect x="545" y="344" width="4" height="1" fill="#dcf2ee" />
<rect x="550" y="344" width="1" height="1" fill="#dcf2ee" />
<rect x="552" y="344" width="4" height="1" fill="#dcf2ee" />
<rect x="557" y="344" width="1" height="1" fill="#dcf2ee" />
<rect x="559" y="344" width="4" height="1" fill="#dcf2ee" />
<rect x="564" y="344" width="1" height="1" fill="#dcf2ee" />
<rect x="566" y="344" width="4" height="1" fill="#dcf2ee" />
<rect x="571" y="344" width="1" height="1" fill="#dcf2ee" />
<rect x="573" y="344" width="4" height="1" fill="#dcf2ee" />
<rect x="578" y="344" width="1" height="1" fill="#dcf2ee" />
<rect x="580" y="344" width="4" height="1" fill="#dcf2ee" />
<rect x="585" y="344" width="1" height="1" fill="#dcf2ee" />
<rect x="587" y="344" width="4" height="1" fill="#dcf2ee" />
<rect x="592" y="344" width="1" height="1" fill="#dcf2ee" />
<rect x="594" y="344" width="4" height="1" fill="#dcf2ee" />
<rect x="599" y="344" width="1" height="1" fill="#dcf2ee" />
<rect x="601" y="344" width="4" height="1" fill="#dcf2ee" />
<rect x="606" y="344" width="1" height="1" fill="#dcf2ee" />
<rect x="608" y="344" width="4" height="1" fill="#dcf2ee" />
<rect x="613" y="344" width="1" height="1" fill="#dcf2ee" />
<rect x="615" y="344" width="4" height="1" fill="#dcf2ee" />
<rect x="620" y="344" width="1" height="1" fill="#dcf2ee" />
<rect x="622" y="344" width="4" height="1" fill="#dcf2ee" />
<rect x="627" y="344" width="1" height="1" fill="#dcf2ee" />
<rect x="629" y="344" width="4" height="1" fill="#dcf2ee" />
<rect x="634" y="344" width="1" height="1" fill="#dcf2ee" />
<rect x="636" y="344" width="4" height="1" fill="#dcf2ee" />
<rect x="641" y="344" width="1" height="1" fill="#dcf2ee" />
<rect x="643" y="344" width="4" height="1" fill="#dcf2ee" />
<rect x="648" y="344" width="1" height="1" fill="#dcf2ee" />
<rect x="650" y="344" width="4" height="1" fill="#dcf2ee" />
<rect x="655" y="344" width="1" height="1" fill="#dcf2ee" />
<rect x="657" y="344" width="4" height="1" fill="#dcf2ee" />
<rect x="662" y="344" width="1" height="1" fill="#dcf2ee" />
<rect x="664" y="344" width="4" height="1" fill="#dcf2ee" />
<rect x="669" y="344" width="1" height="1" fill="#dcf2ee" />
<rect x="671" y="344" width="4" height="1" fill="#dcf2ee" />
<rect x="676" y="344" width="1" height="1" fill="#dcf2ee" />
<rect x="678" y="344" width="4" height="1" fill="#dcf2ee" />
<rect x="683" y="344" width="1" height="1" fill="#dcf2ee" />
<rect x="685" y="344" width="4" height="1" fill="#dcf2ee" />
<rect x="690" y="344" width="1" height="1" fill="#dcf2ee" />
<rect x="692" y="344" width="4" height="1" fill="#dcf2ee" />
<rect x="697" y="344" width="1" height="1" fill="#dcf2ee" />
<rect x="699" y="344" width="4" height="1" fill="#dcf2ee" />
<rect x="704" y="344" width="1" height="1" fill="#dcf2ee" />
<rect x="706" y="344" width="4" height="1" fill="#dcf2ee" />
<rect x="711" y="344" width="1" height="1" fill="#dcf2ee" />
<rect x="713" y="344" width="4" height="1" fill="#dcf2ee" />
<rect x="718" y="344" width="1" height="1" fill="#dcf2ee" />
<rect x="720" y="344" width="4" height="1" fill="#dcf2ee" />
<rect x="725" y="344" width="1" height="1" fill="#dcf2ee" />
<rect x="727" y="344" width="4" height="1" fill="#dcf2ee" />
<rect x="732" y="344" width="1" height="1" fill="#dcf2ee" />
<rect x="734" y="344" width="4" height="1" fill="#dcf2ee" />
<rect x="739" y="344" width="1" height="1" fill="#dcf2ee" />
<rect x="741" y="344" width="4" height="1" fill="#dcf2ee" />
<rect x="746" y="344" width="1" height="1" fill="#dcf2ee" />
<rect x="748" y="344" width="4" height="1" fill="#dcf2ee" />
<rect x="753" y="344" width="1" height="1" fill="#dcf2ee" />
<rect x="755" y="344" width="4" height="1" fill="#dcf2ee" />
<rect x="760" y="344" width="1" height="1" fill="#dcf2ee" />
<rect x="762" y="344" width="4" height="1" fill="#dcf2ee" />
<rect x="767" y="344" width="1" height="1" fill="#dcf2ee" />
<rect x="769" y="344" width="4" height="1" fill="#dcf2ee" />
<rect x="774" y="344" width="1" height="1" fill="#dcf2ee" />
<rect x="776" y="344" width="4" height="1" fill="#dcf2ee" />
<rect x="781" y="344" width="1" height="1" fill="#dcf2ee" />
<rect x="331" y="19" width="1" height="3" fill="#dcf2ee" />
<rect x="331" y="24" width="1" height="1" fill="#dcf2ee" />
<rect x="331" y="27" width="1" height="3" fill="#dcf2ee" />
<rect x="331" y="32" width="1" height="1" fill="#dcf2ee" />
<rect x="331" y="35" width="1" height="3" fill="#dcf2ee" />
<rect x="331" y="40" width="1" height="1" fill="#dcf2ee" />
<rect x="331" y="43" width="1" height="3" fill="#dcf2ee" />
<rect x="331" y="48" width="1" height="1" fill="#dcf2ee" />
<rect x="331" y="51" width="1" height="3" fill="#dcf2ee" />
<rect x="331" y="56" width="1" height="1" fill="#dcf2ee" />
<rect x="331" y="59" width="1" height="3" fill="#dcf2ee" />
<rect x="331" y="64" width="1" height="1" fill="#dcf2ee" />
<rect x="331" y="67" width="1" height="3" fill="#dcf2ee" />
<rect x="331" y="72" width="1" height="1" fill="#dcf2ee" />
<rect x="331" y="75" width="1" height="3" fill="#dcf2ee" />
<rect x="331" y="80" width="1" height="1" fill="#dcf2ee" />
<rect x="331" y="83" width="1" height="3" fill="#dcf2ee" />
<rect x="331" y="88" width="1" height="1" fill="#dcf2ee" />
<rect x="331" y="91" width="1" height="3" fill="#dcf2ee" />
<rect x="331" y="96" width="1" height="1" fill="#dcf2ee" />
<rect x="331" y="99" width="1" height="3" fill="#dcf2ee" />
<rect x="331" y="104" width="1" height="1" fill="#dcf2ee" />
<rect x="331" y="107" width="1" height="3" fill="#dcf2ee" />
<rect x="331" y="112" width="1" height="1" fill="#dcf2ee" />
<rect x="331" y="115" width="1" height="3" fill="#dcf2ee" />
<rect x="331" y="120" width="1" height="1" fill="#dcf2ee" />
<rect x="331" y="123" width="1" height="3" fill="#dcf2ee" />
<rect x="331" y="128" width="1" height="1" fill="#dcf2ee" />
<rect x="331" y="131" width="1" height="3" fill="#dcf2ee" />
<rect x="331" y="136" width="1" height="1" fill="#dcf2ee" />
<rect x="331" y="139" width="1" height="3" fill="#dcf2ee" />
<rect x="331" y="144" width="1" height="1" fill="#dcf2ee" />
<rect x="331" y="147" width="1" height="3" fill="#dcf2ee" />
<rect x="331" y="152" width="1" height="1" fill="#dcf2ee" />
<rect x="331" y="155" width="1" height="3" fill="#dcf2ee" />
<rect x="331" y="160" width="1" height="1" fill="#dcf2ee" />
<rect x="331" y="163" width="1" height="3" fill="#dcf2ee" />
<rect x="331" y="168" width="1" height="1" fill="#dcf2ee" />
<rect x="331" y="171" width="1" height="3" fill="#dcf2ee" />
<rect x="331" y="176" width="1" height="1" fill="#dcf2ee" />
<rect x="331" y="179" width="1" height="3" fill="#dcf2ee" />
<rect x="331" y="184" width="1" height="1" fill="#dcf2ee" />
<rect x="331" y="187" width="1" height="3" fill="#dcf2ee" />
<rect x="331" y="192" width="1" height="1" fill="#dcf2ee" />
<rect x="331" y="195" width="1" height="3" fill="#dcf2ee" />
<rect x="331" y="200" width="1" height="1" fill="#dcf2ee" />
<rect x="331" y="203" width="1" height="3" fill="#dcf2ee" />
<rect x="331" y="208" width="1" height="1" fill="#dcf2ee" />
<rect x="331" y="211" width="1" height="3" fill="#dcf2ee" />
<rect x="331" y="216" width="1" height="1" fill="#dcf2ee" />
<rect x="331" y="219" width="1" height="3" fill="#dcf2ee" />
<rect x="331" y="224" width="1" height="1" fill="#dcf2ee" />
<rect x="331" y="227" width="1" height="3" fill="#dcf2ee" />
<rect x="331" y="232" width="1" height="1" fill="#dcf2ee" />
<rect x="331" y="235" width="1" height="3" fill="#dcf2ee" />
<rect x="331" y="240" width="1" height="1" fill="#dcf2ee" />
<rect x="331" y="243" width="1" height="3" fill="#dcf2ee" />
<rect x="331" y="248" width="1" height="1" fill="#dcf2ee" />
<rect x="331" y="251" width="1" height="3" fill="#dcf2ee" />
<rect x="331" y="256" width="1" height="1" fill="#dcf2ee" />
<rect x="331" y="259" width="1" height="3" fill="#dcf2ee" />
<rect x="331" y="264" width="1" height="1" fill="#dcf2ee" />
<rect x="331" y="267" width="1" height="3" fill="#dcf2ee" />
<rect x="331" y="272" width="1" height="1" fill="#dcf2ee" />
<rect x="331" y="275" width="1" height="3" fill="#dcf2ee" />
<rect x="331" y="280" width="1" height="1" fill="#dcf2ee" />
<rect x="331" y="283" width="1" height="3" fill="#dcf2ee" />
<rect x="331" y="288" width="1" height="1" fill="#dcf2ee" />
<rect x="331" y="291" width="1" height="3" fill="#dcf2ee" />
<rect x="331" y="296" width="1" height="1" fill="#dcf2ee" />
<rect x="331" y="299" width="1" height="3" fill="#dcf2ee" />
<rect x="331" y="304" width="1" height="1" fill="#dcf2ee" />
<rect x="331" y="307" width="1" height="3" fill="#dcf2ee" />
<rect x="331" y="312" width="1" height="1" fill="#dcf2ee" />
<rect x="331" y="315" width="1" height="3" fill="#dcf2ee" />
<rect x="331" y="320" width="1" height="1" fill="#dcf2ee" />
<rect x="331" y="323" width="1" height="3" fill="#dcf2ee" />
<rect x="331" y="328" width="1" height="1" fill="#dcf2ee" />
<rect x="331" y="331" width="1" height="3" fill="#dcf2ee" />
<rect x="331" y="336" width="1" height="1" fill="#dcf2ee" />
<rect x="331" y="339" width="1" height="3" fill="#dcf2ee" />
<rect x="331" y="344" width="1" height="1" fill="#dcf2ee" />
<rect x="331" y="347" width="1" height="3" fill="#dcf2ee" />
<rect x="331" y="352" width="1" height="1" fill="#dcf2ee" />
<rect x="331" y="355" width="1" height="3" fill="#dcf2ee" />
<rect x="331" y="360" width="1" height="1" fill="#dcf2ee" />
<rect x="331" y="363" width="1" height="3" fill="#dcf2ee" />
<rect x="331" y="368" width="1" height="1" fill="#dcf2ee" />
<rect x="331" y="371" width="1" height="3" fill="#dcf2ee" />
<rect x="331" y="376" width="1" height="1" fill="#dcf2ee" />
<rect x="331" y="379" width="1" height="3" fill="#dcf2ee" />
<rect x="331" y="384" width="1" height="1" fill="#dcf2ee" />
<rect x="331" y="387" width="1" height="3" fill="#dcf2ee" />
<rect x="331" y="392" width="1" height="1" fill="#dcf2ee" />
<rect x="331" y="395" width="1" height="3" fill="#dcf2ee" />
<rect x="331" y="400" width="1" height="1" fill="#dcf2ee" />
<rect x="331" y="403" width="1" height="3" fill="#dcf2ee" />
<rect x="331" y="408" width="1" height="1" fill="#dcf2ee" />
<rect x="331" y="411" width="1" height="3" fill="#dcf2ee" />
<rect x="331" y="416" width="1" height="1" fill="#dcf2ee" />
<rect x="331" y="419" width="1" height="3" fill="#dcf2ee" />
<rect x="331" y="424" width="1" height="1" fill="#dcf2ee" />
<rect x="331" y="427" width="1" height="3" fill="#dcf2ee" />
<rect x="331" y="432" width="1" height="1" fill="#dcf2ee" />
<rect x="331" y="435" width="1" height="3" fill="#dcf2ee" />
<rect x="331" y="440" width="1" height="1" fill="#dcf2ee" />
<rect x="331" y="443" width="1" height="3" fill="#dcf2ee" />
<rect x="331" y="448" width="1" height="1" fill="#dcf2ee" />
<rect x="331" y="451" width="1" height="3" fill="#dcf2ee" />
<rect x="331" y="456" width="1" height="1" fill="#dcf2ee" />
<rect x="331" y="459" width="1" height="3" fill="#dcf2ee" />
<rect x="331" y="464" width="1" height="1" fill="#dcf2ee" />
<rect x="331" y="467" width="1" height="3" fill="#dcf2ee" />
<rect x="331" y="472" width="1" height="1" fill="#dcf2ee" />
<rect x="331" y="475" width="1" height="3" fill="#dcf2ee" />
<rect x="331" y="480" width="1" height="1" fill="#dcf2ee" />
<rect x="331" y="483" width="1" height="3" fill="#dcf2ee" />
<rect x="331" y="488" width="1" height="1" fill="#dcf2ee" />
<rect x="331" y="491" width="1" height="3" fill="#dcf2ee" />
<rect x="331" y="496" width="1" height="1" fill="#dcf2ee" />
<rect x="331" y="499" width="1" height="3" fill="#dcf2ee" />
<rect x="331" y="504" width="1" height="1" fill="#dcf2ee" />
<rect x="331" y="507" width="1" height="3" fill="#dcf2ee" />
<rect x="331" y="512" width="1" height="1" fill="#dcf2ee" />
<rect x="331" y="515" width="1" height="3" fill="#dcf2ee" />
<rect x="331" y="520" width="1" height="1" fill="#dcf2ee" />
<rect x="472" y="19" width="1" height="3" fill="#dcf2ee" />
<rect x="472" y="24" width="1" height="1" fill="#dcf2ee" />
<rect x="472" y="27" width="1" height="3" fill="#dcf2ee" />
<rect x="472" y="32" width="1" height="1" fill="#dcf2ee" />
<rect x="472" y="35" width="1" height="3" fill="#dcf2ee" />
<rect x="472" y="40" width="1" height="1" fill="#dcf2ee" />
<rect x="472" y="43" width="1" height="3" fill="#dcf2ee" />
<rect x="472" y="48" width="1" height="1" fill="#dcf2ee" />
<rect x="472" y="51" width="1" height="3" fill="#dcf2ee" />
<rect x="472" y="56" width="1" height="1" fill="#dcf2ee" />
<rect x="472" y="59" width="1" height="3" fill="#dcf2ee" />
<rect x="472" y="64" width="1" height="1" fill="#dcf2ee" />
<rect x="472" y="67" width="1" height="3" fill="#dcf2ee" />
<rect x="472" y="72" width="1" height="1" fill="#dcf2ee" />
<rect x="472" y="75" width="1" height="3" fill="#dcf2ee" />
<rect x="472" y="80" width="1" height="1" fill="#dcf2ee" />
<rect x="472" y="83" width="1" height="3" fill="#dcf2ee" />
<rect x="472" y="88" width="1" height="1" fill="#dcf2ee" />
<rect x="472" y="91" width="1" height="3" fill="#dcf2ee" />
<rect x="472" y="96" width="1" height="1" fill="#dcf2ee" />
<rect x="472" y="99" width="1" height="3" fill="#dcf2ee" />
<rect x="472" y="104" width="1" height="1" fill="#dcf2ee" />
<rect x="472" y="107" width="1" height="3" fill="#dcf2ee" />
<rect x="472" y="112" width="1" height="1" fill="#dcf2ee" />
<rect x="472" y="115" width="1" height="3" fill="#dcf2ee" />
<rect x="472" y="120" width="1" height="1" fill="#dcf2ee" />
<rect x="472" y="123" width="1" height="3" fill="#dcf2ee" />
<rect x="472" y="128" width="1" height="1" fill="#dcf2ee" />
<rect x="472" y="131" width="1" height="3" fill="#dcf2ee" />
<rect x="472" y="136" width="1" height="1" fill="#dcf2ee" />
<rect x="472" y="139" width="1" height="3" fill="#dcf2ee" />
<rect x="472" y="144" width="1" height="1" fill="#dcf2ee" />
<rect x="472" y="147" width="1" height="3" fill="#dcf2ee" />
<rect x="472" y="152" width="1" height="1" fill="#dcf2ee" />
<rect x="472" y="155" width="1" height="3" fill="#dcf2ee" />
<rect x="472" y="160" width="1" height="1" fill="#dcf2ee" />
<rect x="472" y="163" width="1" height="3" fill="#dcf2ee" />
<rect x="472" y="168" width="1" height="1" fill="#dcf2ee" />
<rect x="472" y="171" width="1" height="3" fill="#dcf2ee" />
<rect x="472" y="176" width="1" height="1" fill="#dcf2ee" />
<rect x="472" y="179" width="1" height="3" fill="#dcf2ee" />
<rect x="472" y="184" width="1" height="1" fill="#dcf2ee" />
<rect x="472" y="187" width="1" height="3" fill="#dcf2ee" />
<rect x="472" y="192" width="1" height="1" fill="#dcf2ee" />
<rect x="472" y="195" width="1" height="3" fill="#dcf2ee" />
<rect x="472" y="200" width="1" height="1" fill="#dcf2ee" />
<rect x="472" y="203" width="1" height="3" fill="#dcf2ee" />
<rect x="472" y="208" width="1" height="1" fill="#dcf2ee" />
<rect x="472" y="211" width="1" height="3" fill="#dcf2ee" />
<rect x="472" y="216" width="1" height="1" fill="#dcf2ee" />
<rect x="472" y="219" width="1" height="3" fill="#dcf2ee" />
<rect x="472" y="224" width="1" height="1" fill="#dcf2ee" />
<rect x="472" y="227" width="1" height="3" fill="#dcf2ee" />
<rect x="472" y="232" width="1" height="1" fill="#dcf2ee" />
<rect x="472" y="235" width="1" height="3" fill="#dcf2ee" />
<rect x="472" y="240" width="1" height="1" fill="#dcf2ee" />
<rect x="472" y="243" width="1" height="3" fill="#dcf2ee" />
<rect x="472" y="248" width="1" height="1" fill="#dcf2ee" />
<rect x="472" y="251" width="1" height="3" fill="#dcf2ee" />
<rect x="472" y="256" width="1" height="1" fill="#dcf2ee" />
<rect x="472" y="259" width="1" height="3" fill="#dcf2ee" />
<rect x="472" y="264" width="1" height="1" fill="#dcf2ee" />
<rect x="472" y="267" width="1" height="3" fill="#dcf2ee" />
<rect x="472" y="272" width="1" height="1" fill="#dcf2ee" />
<rect x="472" y="275" width="1" height="3" fill="#dcf2ee" />
<rect x="472" y="280" width="1" height="1" fill="#dcf2ee" />
<rect x="472" y="283" width="1" height="3" fill="#dcf2ee" />
<rect x="472" y="288" width="1" height="1" fill="#dcf2ee" />
<rect x="472" y="291" width="1" height="3" fill="#dcf2ee" />
<rect x="472" y="296" width="1" height="1" fill="#dcf2ee" />
<rect x="472" y="299" width="1" height="3" fill="#dcf2ee" />
<rect x="472" y="304" width="1" height="1" fill="#dcf2ee" />
<rect x="472" y="307" width="1" height="3" fill="#dcf2ee" />
<rect x="472" y="312" width="1" height="1" fill="#dcf2ee" />
<rect x="472" y="315" width="1" height="3" fill="#dcf2ee" />
<rect x="472" y="320" width="1" height="1" fill="#dcf2ee" />
<rect x="472" y="323" width="1" height="3" fill="#dcf2ee" />
<rect x="472" y="328" width="1" height="1" fill="#dcf2ee" />
<rect x="472" y="331" width="1" height="3" fill="#dcf2ee" />
<rect x="472" y="336" width="1" height="1" fill="#dcf2ee" />
<rect x="472" y="339" width="1" height="3" fill="#dcf2ee" />
<rect x="472" y="344" width="1" height="1" fill="#dcf2ee" />
<rect x="472" y="347" width="1" height="3" fill="#dcf2ee" />
<rect x="472" y="352" width="1" height="1" fill="#dcf2ee" />
<rect x="472" y="355" width="1" height="3" fill="#dcf2ee" />
<rect x="472" y="360" width="1" height="1" fill="#dcf2ee" />
<rect x="472" y="363" width="1" height="3" fill="#dcf2ee" />
<rect x="472" y="368" width="1" height="1" fill="#dcf2ee" />
<rect x="472" y="371" width="1" height="3" fill="#dcf2ee" />
<rect x="472" y="376" width="1" height="1" fill="#dcf2ee" />
<rect x="472" y="379" width="1" height="3" fill="#dcf2ee" />
<rect x="472" y="384" width="1" height="1" fill="#dcf2ee" />
<rect x="472" y="387" width="1" height="3" fill="#dcf2ee" />
<rect x="472" y="392" width="1" height="1" fill="#dcf2ee" />
<rect x="472" y="395" width="1" height="3" fill="#dcf2ee" />
<rect x="472" y="400" width="1" height="1" fill="#dcf2ee" />
<rect x="472" y="403" width="1" height="3" fill="#dcf2ee" />
<rect x="472" y="408" width="1" height="1" fill="#dcf2ee" />
<rect x="472" y="411" width="1" height="3" fill="#dcf2ee" />
<rect x="472" y="416" width="1" height="1" fill="#dcf2ee" />
<rect x="472" y="419" width="1" height="3" fill="#dcf2ee" />
<rect x="472" y="424" width="1" height="1" fill="#dcf2ee" />
<rect x="472" y="427" width="1" height="3" fill="#dcf2ee" />
<rect x="472" y="432" width="1" height="1" fill="#dcf2ee" />
<rect x="472" y="435" width="1" height="3" fill="#dcf2ee" />
<rect x="472" y="440" width="1" height="1" fill="#dcf2ee" />
<rect x="472" y="443" width="1" height="3" fill="#dcf2ee" />
<rect x="472" y="448" width="1" height="1" fill="#dcf2ee" />
<rect x="472" y="451" width="1" height="3" fill="#dcf2ee" />
<rect x="472" y="456" width="1" height="1" fill="#dcf2ee" />
<rect x="472" y="459" width="1" height="3" fill="#dcf2ee" />
<rect x="472" y="464" width="1" height="1" fill="#dcf2ee" />
<rect x="472" y="467" width="1" height="3" fill="#dcf2ee" />
<rect x="472" y="472" width="1" height="1" fill="#dcf2ee" />
<rect x="472" y="475" width="1" height="3" fill="#dcf2ee" />
<rect x="472" y="480" width="1" height="1" fill="#dcf2ee" />
<rect x="472" y="483" width="1" height="3" fill="#dcf2ee" />
<rect x="472" y="488" width="1" height="1" fill="#dcf2ee" />
<rect x="472" y="491" width="1" height="3" fill="#dcf2ee" />
<rect x="472" y="496" width="1" height="1" fill="#dcf2ee" />
<rect x="472" y="499" width="1" height="3" fill="#dcf2ee" />
<rect x="472" y="504" width="1" height="1" fill="#dcf2ee" />
<rect x="472" y="507" width="1" height="3" fill="#dcf2ee" />
<rect x="472" y="512" width="1" height="1" fill="#dcf2ee" />
<rect x="472" y="515" width="1" height="3" fill="#dcf2ee" />
<rect x="472" y="520" width="1" height="1" fill="#dcf2ee" />
<rect x="22" y="129" width="760" height="1" fill="#f2e878" />
<rect x="22" y="130" width="760" height="1" fill="#f2e878" opacity="0.8"/>
<rect x="32" y="128" width="1" height="1" fill="#f2e878" opacity="0.55"/>
<rect x="34" y="128" width="1" height="1" fill="#f2e878" opacity="0.55"/>
<rect x="52" y="131" width="1" height="1" fill="#f2e878" opacity="0.45"/>
<rect x="64" y="128" width="1" height="1" fill="#f2e878" opacity="0.55"/>
<rect x="72" y="128" width="1" height="1" fill="#f2e878" opacity="0.55"/>
<rect x="96" y="128" width="1" height="1" fill="#f2e878" opacity="0.55"/>
<rect x="98" y="131" width="1" height="1" fill="#f2e878" opacity="0.45"/>
<rect x="132" y="131" width="1" height="1" fill="#f2e878" opacity="0.45"/>
<rect x="152" y="128" width="1" height="1" fill="#f2e878" opacity="0.55"/>
<rect x="158" y="128" width="1" height="1" fill="#f2e878" opacity="0.55"/>
<rect x="164" y="131" width="1" height="1" fill="#f2e878" opacity="0.45"/>
<rect x="172" y="128" width="1" height="1" fill="#f2e878" opacity="0.55"/>
<rect x="176" y="128" width="1" height="1" fill="#f2e878" opacity="0.55"/>
<rect x="192" y="128" width="1" height="1" fill="#f2e878" opacity="0.55"/>
<rect x="196" y="128" width="1" height="1" fill="#f2e878" opacity="0.55"/>
<rect x="198" y="131" width="1" height="1" fill="#f2e878" opacity="0.45"/>
<rect x="204" y="131" width="1" height="1" fill="#f2e878" opacity="0.45"/>
<rect x="206" y="128" width="1" height="1" fill="#f2e878" opacity="0.55"/>
<rect x="248" y="128" width="1" height="1" fill="#f2e878" opacity="0.55"/>
<rect x="254" y="128" width="1" height="1" fill="#f2e878" opacity="0.55"/>
<rect x="260" y="128" width="1" height="1" fill="#f2e878" opacity="0.55"/>
<rect x="274" y="128" width="1" height="1" fill="#f2e878" opacity="0.55"/>
<rect x="276" y="128" width="1" height="1" fill="#f2e878" opacity="0.55"/>
<rect x="304" y="128" width="1" height="1" fill="#f2e878" opacity="0.55"/>
<rect x="318" y="131" width="1" height="1" fill="#f2e878" opacity="0.45"/>
<rect x="324" y="131" width="1" height="1" fill="#f2e878" opacity="0.45"/>
<rect x="336" y="131" width="1" height="1" fill="#f2e878" opacity="0.45"/>
<rect x="348" y="131" width="1" height="1" fill="#f2e878" opacity="0.45"/>
<rect x="352" y="131" width="1" height="1" fill="#f2e878" opacity="0.45"/>
<rect x="358" y="131" width="1" height="1" fill="#f2e878" opacity="0.45"/>
<rect x="370" y="131" width="1" height="1" fill="#f2e878" opacity="0.45"/>
<rect x="388" y="131" width="1" height="1" fill="#f2e878" opacity="0.45"/>
<rect x="390" y="128" width="1" height="1" fill="#f2e878" opacity="0.55"/>
<rect x="420" y="128" width="1" height="1" fill="#f2e878" opacity="0.55"/>
<rect x="428" y="128" width="1" height="1" fill="#f2e878" opacity="0.55"/>
<rect x="442" y="128" width="1" height="1" fill="#f2e878" opacity="0.55"/>
<rect x="446" y="131" width="1" height="1" fill="#f2e878" opacity="0.45"/>
<rect x="472" y="131" width="1" height="1" fill="#f2e878" opacity="0.45"/>
<rect x="478" y="131" width="1" height="1" fill="#f2e878" opacity="0.45"/>
<rect x="488" y="128" width="1" height="1" fill="#f2e878" opacity="0.55"/>
<rect x="494" y="128" width="1" height="1" fill="#f2e878" opacity="0.55"/>
<rect x="508" y="128" width="1" height="1" fill="#f2e878" opacity="0.55"/>
<rect x="510" y="128" width="1" height="1" fill="#f2e878" opacity="0.55"/>
<rect x="512" y="131" width="1" height="1" fill="#f2e878" opacity="0.45"/>
<rect x="514" y="131" width="1" height="1" fill="#f2e878" opacity="0.45"/>
<rect x="516" y="128" width="1" height="1" fill="#f2e878" opacity="0.55"/>
<rect x="522" y="128" width="1" height="1" fill="#f2e878" opacity="0.55"/>
<rect x="538" y="131" width="1" height="1" fill="#f2e878" opacity="0.45"/>
<rect x="542" y="131" width="1" height="1" fill="#f2e878" opacity="0.45"/>
<rect x="550" y="128" width="1" height="1" fill="#f2e878" opacity="0.55"/>
<rect x="552" y="131" width="1" height="1" fill="#f2e878" opacity="0.45"/>
<rect x="586" y="128" width="1" height="1" fill="#f2e878" opacity="0.55"/>
<rect x="606" y="131" width="1" height="1" fill="#f2e878" opacity="0.45"/>
<rect x="622" y="131" width="1" height="1" fill="#f2e878" opacity="0.45"/>
<rect x="626" y="128" width="1" height="1" fill="#f2e878" opacity="0.55"/>
<rect x="628" y="131" width="1" height="1" fill="#f2e878" opacity="0.45"/>
<rect x="632" y="128" width="1" height="1" fill="#f2e878" opacity="0.55"/>
<rect x="634" y="128" width="1" height="1" fill="#f2e878" opacity="0.55"/>
<rect x="636" y="128" width="1" height="1" fill="#f2e878" opacity="0.55"/>
<rect x="640" y="131" width="1" height="1" fill="#f2e878" opacity="0.45"/>
<rect x="642" y="128" width="1" height="1" fill="#f2e878" opacity="0.55"/>
<rect x="646" y="131" width="1" height="1" fill="#f2e878" opacity="0.45"/>
<rect x="660" y="128" width="1" height="1" fill="#f2e878" opacity="0.55"/>
<rect x="668" y="131" width="1" height="1" fill="#f2e878" opacity="0.45"/>
<rect x="674" y="128" width="1" height="1" fill="#f2e878" opacity="0.55"/>
<rect x="684" y="131" width="1" height="1" fill="#f2e878" opacity="0.45"/>
<rect x="702" y="128" width="1" height="1" fill="#f2e878" opacity="0.55"/>
<rect x="712" y="131" width="1" height="1" fill="#f2e878" opacity="0.45"/>
<rect x="728" y="131" width="1" height="1" fill="#f2e878" opacity="0.45"/>
<rect x="730" y="128" width="1" height="1" fill="#f2e878" opacity="0.55"/>
<rect x="742" y="131" width="1" height="1" fill="#f2e878" opacity="0.45"/>
<rect x="746" y="131" width="1" height="1" fill="#f2e878" opacity="0.45"/>
<rect x="772" y="128" width="1" height="1" fill="#f2e878" opacity="0.55"/>
<rect x="778" y="131" width="1" height="1" fill="#f2e878" opacity="0.45"/>
<rect x="212" y="390" width="570" height="1" fill="#b0bcff" />
<rect x="212" y="391" width="570" height="1" fill="#b0bcff" opacity="0.8"/>
<rect x="216" y="392" width="1" height="1" fill="#b0bcff" opacity="0.45"/>
<rect x="260" y="392" width="1" height="1" fill="#b0bcff" opacity="0.45"/>
<rect x="264" y="392" width="1" height="1" fill="#b0bcff" opacity="0.45"/>
<rect x="282" y="389" width="1" height="1" fill="#b0bcff" opacity="0.55"/>
<rect x="284" y="389" width="1" height="1" fill="#b0bcff" opacity="0.55"/>
<rect x="296" y="389" width="1" height="1" fill="#b0bcff" opacity="0.55"/>
<rect x="314" y="392" width="1" height="1" fill="#b0bcff" opacity="0.45"/>
<rect x="320" y="392" width="1" height="1" fill="#b0bcff" opacity="0.45"/>
<rect x="326" y="389" width="1" height="1" fill="#b0bcff" opacity="0.55"/>
<rect x="354" y="392" width="1" height="1" fill="#b0bcff" opacity="0.45"/>
<rect x="366" y="392" width="1" height="1" fill="#b0bcff" opacity="0.45"/>
<rect x="372" y="392" width="1" height="1" fill="#b0bcff" opacity="0.45"/>
<rect x="378" y="392" width="1" height="1" fill="#b0bcff" opacity="0.45"/>
<rect x="382" y="392" width="1" height="1" fill="#b0bcff" opacity="0.45"/>
<rect x="398" y="392" width="1" height="1" fill="#b0bcff" opacity="0.45"/>
<rect x="400" y="389" width="1" height="1" fill="#b0bcff" opacity="0.55"/>
<rect x="418" y="389" width="1" height="1" fill="#b0bcff" opacity="0.55"/>
<rect x="440" y="392" width="1" height="1" fill="#b0bcff" opacity="0.45"/>
<rect x="444" y="389" width="1" height="1" fill="#b0bcff" opacity="0.55"/>
<rect x="446" y="392" width="1" height="1" fill="#b0bcff" opacity="0.45"/>
<rect x="452" y="392" width="1" height="1" fill="#b0bcff" opacity="0.45"/>
<rect x="454" y="392" width="1" height="1" fill="#b0bcff" opacity="0.45"/>
<rect x="466" y="392" width="1" height="1" fill="#b0bcff" opacity="0.45"/>
<rect x="470" y="392" width="1" height="1" fill="#b0bcff" opacity="0.45"/>
<rect x="482" y="389" width="1" height="1" fill="#b0bcff" opacity="0.55"/>
<rect x="512" y="389" width="1" height="1" fill="#b0bcff" opacity="0.55"/>
<rect x="524" y="392" width="1" height="1" fill="#b0bcff" opacity="0.45"/>
<rect x="528" y="389" width="1" height="1" fill="#b0bcff" opacity="0.55"/>
<rect x="542" y="392" width="1" height="1" fill="#b0bcff" opacity="0.45"/>
<rect x="548" y="389" width="1" height="1" fill="#b0bcff" opacity="0.55"/>
<rect x="554" y="389" width="1" height="1" fill="#b0bcff" opacity="0.55"/>
<rect x="566" y="392" width="1" height="1" fill="#b0bcff" opacity="0.45"/>
<rect x="592" y="392" width="1" height="1" fill="#b0bcff" opacity="0.45"/>
<rect x="594" y="389" width="1" height="1" fill="#b0bcff" opacity="0.55"/>
<rect x="596" y="389" width="1" height="1" fill="#b0bcff" opacity="0.55"/>
<rect x="600" y="392" width="1" height="1" fill="#b0bcff" opacity="0.45"/>
<rect x="620" y="392" width="1" height="1" fill="#b0bcff" opacity="0.45"/>
<rect x="636" y="389" width="1" height="1" fill="#b0bcff" opacity="0.55"/>
<rect x="642" y="392" width="1" height="1" fill="#b0bcff" opacity="0.45"/>
<rect x="646" y="392" width="1" height="1" fill="#b0bcff" opacity="0.45"/>
<rect x="650" y="392" width="1" height="1" fill="#b0bcff" opacity="0.45"/>
<rect x="654" y="392" width="1" height="1" fill="#b0bcff" opacity="0.45"/>
<rect x="656" y="389" width="1" height="1" fill="#b0bcff" opacity="0.55"/>
<rect x="658" y="392" width="1" height="1" fill="#b0bcff" opacity="0.45"/>
<rect x="660" y="392" width="1" height="1" fill="#b0bcff" opacity="0.45"/>
<rect x="664" y="389" width="1" height="1" fill="#b0bcff" opacity="0.55"/>
<rect x="666" y="389" width="1" height="1" fill="#b0bcff" opacity="0.55"/>
<rect x="674" y="389" width="1" height="1" fill="#b0bcff" opacity="0.55"/>
<rect x="680" y="389" width="1" height="1" fill="#b0bcff" opacity="0.55"/>
<rect x="686" y="389" width="1" height="1" fill="#b0bcff" opacity="0.55"/>
<rect x="690" y="392" width="1" height="1" fill="#b0bcff" opacity="0.45"/>
<rect x="696" y="392" width="1" height="1" fill="#b0bcff" opacity="0.45"/>
<rect x="698" y="389" width="1" height="1" fill="#b0bcff" opacity="0.55"/>
<rect x="722" y="389" width="1" height="1" fill="#b0bcff" opacity="0.55"/>
<rect x="730" y="389" width="1" height="1" fill="#b0bcff" opacity="0.55"/>
<rect x="732" y="389" width="1" height="1" fill="#b0bcff" opacity="0.55"/>
<rect x="734" y="389" width="1" height="1" fill="#b0bcff" opacity="0.55"/>
<rect x="736" y="392" width="1" height="1" fill="#b0bcff" opacity="0.45"/>
<rect x="738" y="389" width="1" height="1" fill="#b0bcff" opacity="0.55"/>
<rect x="740" y="389" width="1" height="1" fill="#b0bcff" opacity="0.55"/>
<rect x="758" y="389" width="1" height="1" fill="#b0bcff" opacity="0.55"/>
<rect x="766" y="389" width="1" height="1" fill="#b0bcff" opacity="0.55"/>
<rect x="772" y="392" width="1" height="1" fill="#b0bcff" opacity="0.45"/>
</svg>
<svg width="800" height="600" viewBox="0 0 800 600">
<!-- play -->
<polygon points="110,2.5 120.5,10 110,17.5" fill="#aaec3c"/>
<!-- home -->
<path d="M203.5,18.3 V10.6 H201.5 L209.5,2.6 L217.5,10.6 H215.5 V18.3 H211.3 V12.5 H207.7 V18.3 Z" fill="none" stroke="#fff" stroke-width="1.15" stroke-linejoin="round"/>
<!-- timeline -->
<g fill="#b4b0b8">
<rect x="257" y="9" width="290" height="2"/>
<rect x="252" y="1.5" width="2" height="17"/><rect x="252" y="1.5" width="5" height="1.5"/><rect x="252" y="17" width="5" height="1.5"/>
<rect x="292" y="1.5" width="2" height="17"/><rect x="292" y="1.5" width="4" height="1.5"/><rect x="292" y="17" width="4" height="1.5"/>
<rect x="511" y="1.5" width="2" height="17"/><rect x="509" y="1.5" width="4" height="1.5"/><rect x="509" y="17" width="4" height="1.5"/>
<rect x="550" y="1.5" width="2" height="17"/><rect x="547" y="1.5" width="5" height="1.5"/><rect x="547" y="17" width="5" height="1.5"/>
<path d="M399,2 H404 V5 L401.5,7 L399,5 Z"/>
</g>
<!-- trigger T marker -->
<path d="M396.5,20.5 H407.5 V31 L402,35.5 L396.5,31 Z" fill="#2a1a08" stroke="#e8d878" stroke-width="1"/>
<rect x="398" y="24" width="8" height="1.4" fill="#ecd878"/>
<rect x="401.3" y="24" width="1.5" height="6.5" fill="#ecd878"/>
<!-- lock -->
<rect x="665.8" y="7.2" width="9.6" height="9.2" fill="none" stroke="#fff" stroke-width="1.1"/>
<path d="M666.3,3.4 Q668,2.2 671,2.4 Q675.4,2.6 675.4,6 V7.5" fill="none" stroke="#fff" stroke-width="1.1"/>
<!-- battery -->
<rect x="772.6" y="4.6" width="10" height="13" fill="none" stroke="#fff" stroke-width="1.3"/>
<rect x="775" y="2" width="5" height="2.6" fill="#fff"/>
<!-- ch1 marker -->
<polygon points="0,115 14,115 19.6,121.5 14,128 0,128 5,121.5" fill="#f0d830"/>
<path d="M10,117 H11.9 V126 H10 V119.2 L7.8,120.18 V118.58 Z" fill="#000"/>
<!-- trigger level marker right -->
<polygon points="784.3,121.5 800,114.5 797,121.5 800,128.5" fill="#f0e040"/>
<!-- ch2 marker -->
<polygon points="0.5,365.5 14.5,365.5 19.5,371.5 14.5,377.5 0.5,377.5 5,371.5" fill="#0c1048" stroke="#b0b8f0" stroke-width="1.4"/>
<text x="9.8" y="376" font-family="Liberation Sans" font-weight="bold" font-size="12" fill="#c8d4ff" text-anchor="middle">2</text>
<!-- a circle -->
<circle cx="33.5" cy="204.5" r="8.5" fill="#9ce8ee"/>
<text x="33.5" y="207.5" font-family="Liberation Mono" font-size="13" fill="#102020" text-anchor="middle">a</text>
<!-- b circle -->
<circle cx="33.6" cy="333.4" r="8" fill="#060308" stroke="#d4f4ec" stroke-width="1.3"/>
<text x="33.6" y="337.5" font-family="Liberation Mono" font-size="13" fill="#d8f4ee" text-anchor="middle">b</text>
<!-- measurement box -->
<rect x="26" y="357" width="186" height="160" fill="#25253c" stroke="#6c6ca4" stroke-width="2"/>
<rect x="31" y="360" width="16" height="16" fill="#f0dc30"/>
<path d="M37.6,363 H39.5 V373 H37.6 V365.2 L34.800000000000004,366.71999999999997 V365.12 Z" fill="#000"/>
<path d="M697.5,540 H706.5 L710.5,527.5 H718" fill="none" stroke="#ecec98" stroke-width="1.2"/>
<!-- bottom bar -->
<rect x="0" y="542" width="800" height="58" fill="#413b5a"/>
<rect x="322" y="542" width="4" height="58" fill="#46405f"/>
<rect x="408" y="542" width="5" height="58" fill="#3b3656"/>
<rect x="414" y="542" width="4" height="58" fill="#46405f"/>
<rect x="500" y="542" width="5" height="58" fill="#3b3656"/>
<rect x="506" y="542" width="91" height="58" fill="#6c666e"/>
<rect x="592" y="542" width="5" height="58" fill="#656068"/>
<rect x="598" y="542" width="4" height="58" fill="#46405f"/>
<rect x="684" y="542" width="5" height="58" fill="#3b3656"/>
<rect x="690" y="542" width="4" height="58" fill="#46405f"/>
<rect x="776" y="542" width="5" height="58" fill="#3a3658"/>
<rect x="782" y="542" width="18" height="58" fill="#62658a"/>
<rect x="0" y="542" width="800" height="1" fill="#4c4668"/>
<g fill="#0a0818">
<rect x="321" y="542" width="1" height="58"/>
<rect x="413" y="542" width="1" height="58"/>
<rect x="505" y="542" width="1" height="58"/>
<rect x="597" y="542" width="1" height="58"/>
<rect x="689" y="542" width="1" height="58"/>
<rect x="781" y="542" width="1" height="58"/>
</g>
<rect x="2" y="550" width="16" height="16" fill="#f0dc38"/>
<path d="M9.3,553 H10.9 V563.5 H9.3 V555.2 L6.700000000000001,556.5400000000001 V554.94 Z" fill="#000"/>
<rect x="2" y="575" width="16" height="16" fill="#a8c8f0"/>
<text x="10" y="588" font-family="Liberation Sans" font-weight="bold" font-size="13" fill="#101040" text-anchor="middle">2</text>
</svg>
<div class="t" style="left:139px;top:4px">Auto</div>
<div class="t" style="left:559px;top:5px">T:0.000ns</div>
<div class="t" style="left:680px;top:5px">1:38</div>
<div class="t" style="left:57px;top:359px;line-height:22.3px;color:#fcfcfc"> &#916;y: 3.00V
 y1: -1.46V
 y2: -4.46V
 &#916;x: 2.820ms
1/x: 354.6Hz
x1: -1.400ms
x2: 1.420ms</div>
<div class="t" style="left:20px;top:527px">M: 1.0ms    (500KS/s)   Depth:10K(12-bit)</div>
<div class="t" style="left:627px;top:528px;color:#ecec98">CH1:DC-  0.00mV</div>
<div class="t" style="left:20px;top:552px;color:#fcf09c">1.00V<span style="position:relative;top:-2px">~</span></div>
<div class="t" style="left:114px;top:552px;color:#fcf09c">3.00div</div>
<div class="t" style="left:20px;top:577px;color:#bcd0fc">1.00V<span style="position:relative;top:-2px">~</span></div>
<div class="t" style="left:114px;top:577px;color:#bcd0fc">-2.00div</div>
<div class="t" style="left:342px;top:553px"><span class="hl">Time&amp;</span></div>
<div class="t" style="left:332px;top:577px"><span class="hl">Voltage</span></div>
<div class="t" style="left:413px;top:553px">Line Type</div>
<div class="t" style="left:424px;top:577px"><span class="hl">Voltage</span></div>
<div class="t" style="left:520px;top:553px">Window</div>
<div class="t" style="left:531px;top:577px"><span class="hl">Main</span></div>
<div class="t" style="left:622px;top:553px">Line</div>
<div class="t" style="left:607px;top:577px">a</div>
<div class="t" style="left:633px;top:577px"><span class="hl">b</span></div>
<div class="t" style="left:657px;top:577px">ab</div>
<div class="t" style="left:704px;top:553px">Source</div>
<div class="t" style="left:697px;top:577px"><span class="hl">CH1</span></div>
<div class="t" style="left:741px;top:577px;color:#c0bcd4">CH2</div>
</body></html>
